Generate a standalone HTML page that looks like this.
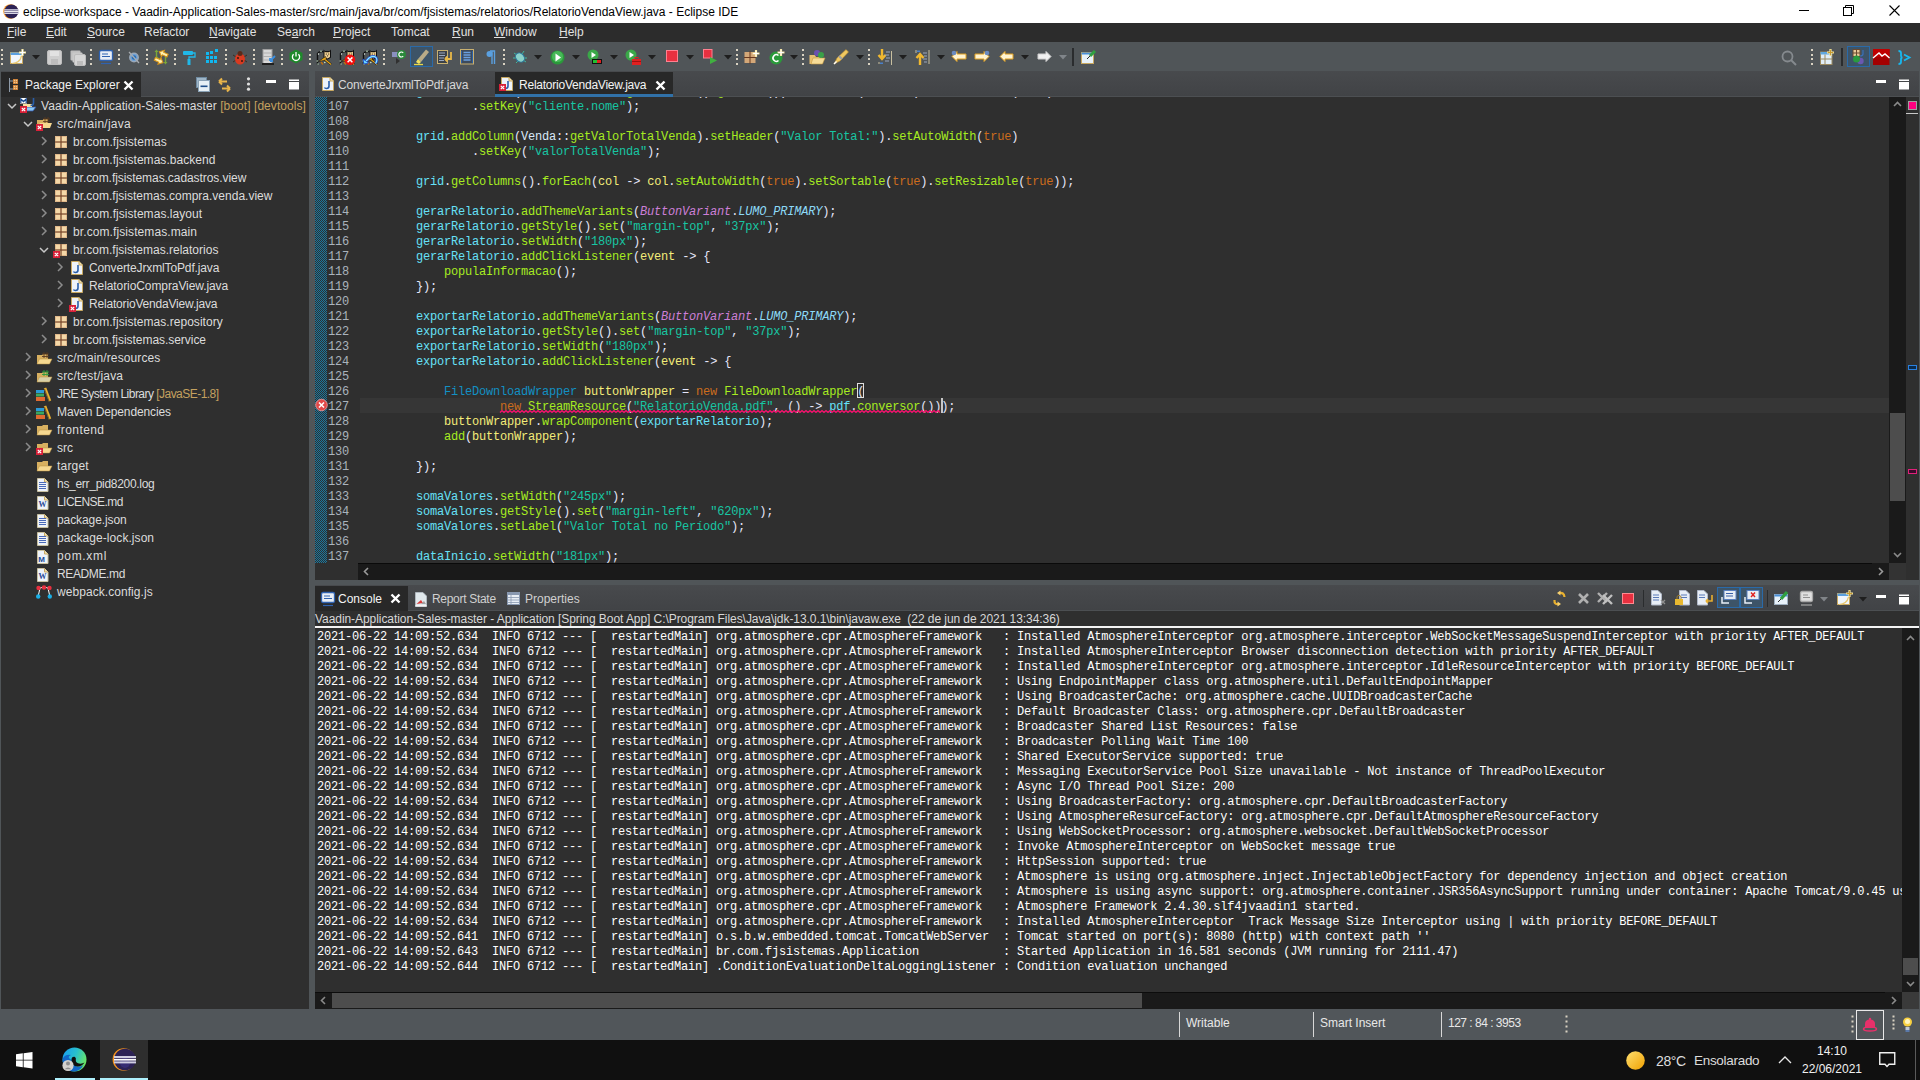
<!DOCTYPE html><html><head><meta charset="utf-8"><style>
html,body{margin:0;padding:0;}
body{width:1920px;height:1080px;position:relative;overflow:hidden;background:#505558;font-family:"Liberation Sans",sans-serif;}
.t{position:absolute;font-family:"Liberation Sans",sans-serif;font-size:12px;line-height:15px;white-space:pre;}
.m{position:absolute;font-family:"Liberation Mono",monospace;font-size:12px;letter-spacing:-0.2px;line-height:15px;white-space:pre;}
u{text-decoration:underline;text-underline-offset:1px;}
svg{position:absolute;overflow:visible;}
</style></head><body>
<div style="position:absolute;left:0px;top:0px;width:1920px;height:23px;background:#ffffff;"></div>
<svg style="left:3px;top:4px;" width="16" height="15" viewBox="0 0 16 15"><circle cx="7.6" cy="7.5" r="7.3" fill="#f7941e"/><circle cx="8.4" cy="7.5" r="7" fill="#2c2255"/><rect x="1.2" y="5.2" width="14.6" height="1.4" fill="#d8d6e6"/><rect x="1.2" y="7.1" width="14.6" height="1" fill="#ffffff"/><rect x="1.2" y="8.6" width="14.6" height="1.4" fill="#d8d6e6"/></svg>
<div class="t" style="left:23px;top:5px;color:#000;">eclipse-workspace - Vaadin-Application-Sales-master/src/main/java/br/com/fjsistemas/relatorios/RelatorioVendaView.java - Eclipse IDE</div>
<div style="position:absolute;left:1799px;top:10px;width:10px;height:1px;background:#000;"></div>
<svg style="left:1843px;top:5px;" width="12" height="12" viewBox="0 0 12 12"><rect x="0.5" y="2.5" width="8" height="8" fill="none" stroke="#000"/><path d="M2.5 2.5V0.5H10.5V8.5H8.5" fill="none" stroke="#000"/></svg>
<svg style="left:1889px;top:5px;" width="12" height="12" viewBox="0 0 12 12"><path d="M0.5 0.5L10.5 10.5M10.5 0.5L0.5 10.5" stroke="#000" stroke-width="1.1"/></svg>
<div style="position:absolute;left:0px;top:23px;width:1920px;height:19px;background:#2c2c2c;"></div>
<div class="t" style="left:7px;top:25px;color:#e2e2e2;"><u>F</u>ile</div>
<div class="t" style="left:46px;top:25px;color:#e2e2e2;"><u>E</u>dit</div>
<div class="t" style="left:87px;top:25px;color:#e2e2e2;"><u>S</u>ource</div>
<div class="t" style="left:144px;top:25px;color:#e2e2e2;">Refactor</div>
<div class="t" style="left:209px;top:25px;color:#e2e2e2;"><u>N</u>avigate</div>
<div class="t" style="left:277px;top:25px;color:#e2e2e2;">Se<u>a</u>rch</div>
<div class="t" style="left:333px;top:25px;color:#e2e2e2;"><u>P</u>roject</div>
<div class="t" style="left:391px;top:25px;color:#e2e2e2;">Tomcat</div>
<div class="t" style="left:452px;top:25px;color:#e2e2e2;"><u>R</u>un</div>
<div class="t" style="left:494px;top:25px;color:#e2e2e2;"><u>W</u>indow</div>
<div class="t" style="left:559px;top:25px;color:#e2e2e2;"><u>H</u>elp</div>
<div style="position:absolute;left:0px;top:42px;width:1920px;height:29px;background:#505558;"></div>
<svg style="left:1px;top:49px;" width="3" height="16" viewBox="0 0 3 16"><rect x="0" y="0" width="2" height="2" fill="#d9d2c2"/><rect x="0" y="5" width="2" height="2" fill="#d9d2c2"/><rect x="0" y="9" width="2" height="2" fill="#d9d2c2"/><rect x="0" y="14" width="2" height="2" fill="#d9d2c2"/></svg>
<svg style="left:90px;top:49px;" width="3" height="16" viewBox="0 0 3 16"><rect x="0" y="0" width="2" height="2" fill="#d9d2c2"/><rect x="0" y="5" width="2" height="2" fill="#d9d2c2"/><rect x="0" y="9" width="2" height="2" fill="#d9d2c2"/><rect x="0" y="14" width="2" height="2" fill="#d9d2c2"/></svg>
<svg style="left:118px;top:49px;" width="3" height="16" viewBox="0 0 3 16"><rect x="0" y="0" width="2" height="2" fill="#d9d2c2"/><rect x="0" y="5" width="2" height="2" fill="#d9d2c2"/><rect x="0" y="9" width="2" height="2" fill="#d9d2c2"/><rect x="0" y="14" width="2" height="2" fill="#d9d2c2"/></svg>
<svg style="left:146px;top:49px;" width="3" height="16" viewBox="0 0 3 16"><rect x="0" y="0" width="2" height="2" fill="#d9d2c2"/><rect x="0" y="5" width="2" height="2" fill="#d9d2c2"/><rect x="0" y="9" width="2" height="2" fill="#d9d2c2"/><rect x="0" y="14" width="2" height="2" fill="#d9d2c2"/></svg>
<svg style="left:174px;top:49px;" width="3" height="16" viewBox="0 0 3 16"><rect x="0" y="0" width="2" height="2" fill="#d9d2c2"/><rect x="0" y="5" width="2" height="2" fill="#d9d2c2"/><rect x="0" y="9" width="2" height="2" fill="#d9d2c2"/><rect x="0" y="14" width="2" height="2" fill="#d9d2c2"/></svg>
<svg style="left:225px;top:49px;" width="3" height="16" viewBox="0 0 3 16"><rect x="0" y="0" width="2" height="2" fill="#d9d2c2"/><rect x="0" y="5" width="2" height="2" fill="#d9d2c2"/><rect x="0" y="9" width="2" height="2" fill="#d9d2c2"/><rect x="0" y="14" width="2" height="2" fill="#d9d2c2"/></svg>
<svg style="left:253px;top:49px;" width="3" height="16" viewBox="0 0 3 16"><rect x="0" y="0" width="2" height="2" fill="#d9d2c2"/><rect x="0" y="5" width="2" height="2" fill="#d9d2c2"/><rect x="0" y="9" width="2" height="2" fill="#d9d2c2"/><rect x="0" y="14" width="2" height="2" fill="#d9d2c2"/></svg>
<svg style="left:281px;top:49px;" width="3" height="16" viewBox="0 0 3 16"><rect x="0" y="0" width="2" height="2" fill="#d9d2c2"/><rect x="0" y="5" width="2" height="2" fill="#d9d2c2"/><rect x="0" y="9" width="2" height="2" fill="#d9d2c2"/><rect x="0" y="14" width="2" height="2" fill="#d9d2c2"/></svg>
<svg style="left:309px;top:49px;" width="3" height="16" viewBox="0 0 3 16"><rect x="0" y="0" width="2" height="2" fill="#d9d2c2"/><rect x="0" y="5" width="2" height="2" fill="#d9d2c2"/><rect x="0" y="9" width="2" height="2" fill="#d9d2c2"/><rect x="0" y="14" width="2" height="2" fill="#d9d2c2"/></svg>
<svg style="left:383px;top:49px;" width="3" height="16" viewBox="0 0 3 16"><rect x="0" y="0" width="2" height="2" fill="#d9d2c2"/><rect x="0" y="5" width="2" height="2" fill="#d9d2c2"/><rect x="0" y="9" width="2" height="2" fill="#d9d2c2"/><rect x="0" y="14" width="2" height="2" fill="#d9d2c2"/></svg>
<svg style="left:503px;top:49px;" width="3" height="16" viewBox="0 0 3 16"><rect x="0" y="0" width="2" height="2" fill="#d9d2c2"/><rect x="0" y="5" width="2" height="2" fill="#d9d2c2"/><rect x="0" y="9" width="2" height="2" fill="#d9d2c2"/><rect x="0" y="14" width="2" height="2" fill="#d9d2c2"/></svg>
<svg style="left:736px;top:49px;" width="3" height="16" viewBox="0 0 3 16"><rect x="0" y="0" width="2" height="2" fill="#d9d2c2"/><rect x="0" y="5" width="2" height="2" fill="#d9d2c2"/><rect x="0" y="9" width="2" height="2" fill="#d9d2c2"/><rect x="0" y="14" width="2" height="2" fill="#d9d2c2"/></svg>
<svg style="left:802px;top:49px;" width="3" height="16" viewBox="0 0 3 16"><rect x="0" y="0" width="2" height="2" fill="#d9d2c2"/><rect x="0" y="5" width="2" height="2" fill="#d9d2c2"/><rect x="0" y="9" width="2" height="2" fill="#d9d2c2"/><rect x="0" y="14" width="2" height="2" fill="#d9d2c2"/></svg>
<svg style="left:868px;top:49px;" width="3" height="16" viewBox="0 0 3 16"><rect x="0" y="0" width="2" height="2" fill="#d9d2c2"/><rect x="0" y="5" width="2" height="2" fill="#d9d2c2"/><rect x="0" y="9" width="2" height="2" fill="#d9d2c2"/><rect x="0" y="14" width="2" height="2" fill="#d9d2c2"/></svg>
<svg style="left:1811px;top:49px;" width="3" height="16" viewBox="0 0 3 16"><rect x="0" y="0" width="2" height="2" fill="#d9d2c2"/><rect x="0" y="5" width="2" height="2" fill="#d9d2c2"/><rect x="0" y="9" width="2" height="2" fill="#d9d2c2"/><rect x="0" y="14" width="2" height="2" fill="#d9d2c2"/></svg>
<svg style="left:10px;top:49px;" width="16" height="16" viewBox="0 0 16 16"><rect x="0.5" y="3.5" width="12" height="11" fill="#f0f6fc" stroke="#c8a860"/><rect x="0.5" y="3.5" width="12" height="2.5" fill="#5aa0e0"/><path d="M2 14.5Q10 14 11.5 7" stroke="#e8c870" fill="none" stroke-width="1.2"/><path d="M12.5 0V7M9 3.5H16" stroke="#f6e6a0" stroke-width="2.2"/><path d="M12.5 0.8V6.2M9.8 3.5H15.2" stroke="#fff" stroke-width="1"/></svg>
<svg style="left:32px;top:55px;" width="8" height="5" viewBox="0 0 8 5"><path d="M0 0H8L4 4.5Z" fill="#1e1e1e"/></svg>
<svg style="left:47px;top:50px;" width="16" height="15" viewBox="0 0 16 15"><rect x="0.5" y="0.5" width="14" height="14" rx="1.5" fill="#cfcfcf" stroke="#bdbdbd"/><rect x="3" y="1" width="9" height="5" fill="#e2e2e2"/><rect x="4" y="9" width="7" height="5" fill="#bdbdbd"/></svg>
<svg style="left:70px;top:50px;" width="16" height="16" viewBox="0 0 16 16"><rect x="0.5" y="0.5" width="10" height="10" rx="1" fill="#bfbfbf"/><rect x="2.5" y="2.5" width="10" height="10" rx="1" fill="#c9c9c9"/><rect x="4.5" y="4.5" width="11" height="11" rx="1.5" fill="#d6d6d6" stroke="#bcbcbc"/><rect x="7" y="11" width="6" height="4" fill="#bdbdbd"/></svg>
<svg style="left:99px;top:50px;" width="14" height="14" viewBox="0 0 14 14"><rect x="0.5" y="0.5" width="13" height="10" rx="1.5" fill="#e8eef6" stroke="#2f62b0" stroke-width="1.3"/><path d="M3 4H9M3 6.5H11" stroke="#2f62b0" stroke-width="1"/><path d="M2 13.5H12" stroke="#2f62b0" stroke-width="1.2"/></svg>
<svg style="left:128px;top:51px;" width="13" height="13" viewBox="0 0 13 13"><circle cx="6" cy="6.5" r="4.2" fill="#6aa0d8" stroke="#9aa8b8" stroke-width="1.5"/><circle cx="6" cy="6.5" r="2.2" fill="#2b6cb0"/><path d="M1 1L11 12" stroke="#a8acb0" stroke-width="1.2"/></svg>
<svg style="left:153px;top:49px;" width="16" height="16" viewBox="0 0 16 16"><path d="M3.5 0.5L5.5 3H4.2V8H2.8V3H1.5Z" fill="#7aa838"/><path d="M12.5 15.5L10.5 13H11.8V8H13.2V13H14.5Z" fill="#7aa838"/><path d="M3 8L8 12" stroke="#7aa838" stroke-width="2"/><path d="M8 8L13 4" stroke="#7aa838" stroke-width="0"/><g transform="translate(5.5 0.5) rotate(25 4.5 4)"><path d="M0.5 4L4.5 0.5V2.5H9.5V5.5H4.5V7.5Z" fill="#fff0b0" stroke="#d89418" stroke-width="1"/></g><g transform="translate(1 7.5) rotate(25 4.5 4)"><path d="M9.5 4L5.5 0.5V2.5H0.5V5.5H5.5V7.5Z" fill="#fff0b0" stroke="#d89418" stroke-width="1"/></g></svg>
<svg style="left:183px;top:50px;" width="13" height="15" viewBox="0 0 13 15"><rect x="0" y="1" width="10" height="4" rx="1" fill="#20b8e8"/><path d="M10 3H12V7H6V9" stroke="#20b8e8" stroke-width="1.3" fill="none"/><rect x="4.5" y="9" width="3" height="6" fill="#20b8e8"/></svg>
<svg style="left:205px;top:49px;" width="13" height="16" viewBox="0 0 13 16"><rect x="1" y="3" width="3" height="3" fill="#10b8f0"/><rect x="5" y="2" width="3" height="3" fill="#10b8f0"/><rect x="10" y="0" width="3" height="3" fill="#10b8f0"/><rect x="1" y="7" width="3" height="3" fill="#10b8f0"/><rect x="5" y="7" width="3" height="3" fill="#10b8f0"/><rect x="9" y="7" width="3" height="3" fill="#10b8f0"/><rect x="1" y="11" width="3" height="3" fill="#10b8f0"/><rect x="5" y="11" width="3" height="3" fill="#10b8f0"/><rect x="9" y="11" width="3" height="3" fill="#10b8f0"/></svg>
<svg style="left:232px;top:50px;" width="16" height="15" viewBox="0 0 16 15"><path d="M1 5L4 7M15 5L12 7M1 12L4 10M15 12L12 10" stroke="#3a2a20" stroke-width="1"/><ellipse cx="8" cy="9" rx="5" ry="5.5" fill="#d83a20"/><circle cx="8" cy="3.5" r="2.5" fill="#5a2a1a"/><circle cx="6" cy="8" r="1" fill="#3a1a10"/><circle cx="10" cy="11" r="1" fill="#3a1a10"/></svg>
<svg style="left:262px;top:49px;" width="14" height="16" viewBox="0 0 14 16"><rect x="1" y="0.5" width="9" height="14" fill="#d8d8d8" stroke="#a0a0a0"/><path d="M1 4H10M1 7.5H10M1 11H10" stroke="#b0b0b0"/><rect x="0" y="14" width="12" height="2" fill="#202020"/><path d="M13 7L8 12M8 12V9M8 12H11" stroke="#3a8ee0" stroke-width="1.8" fill="none"/></svg>
<svg style="left:289px;top:49px;" width="14" height="15" viewBox="0 0 14 15"><path d="M7 0.5L13.5 4V11L7 14.5L0.5 11V4Z" fill="#1e8a2a"/><path d="M4.6 5.2A3.6 3.6 0 1 0 9.4 5.2" stroke="#fff" stroke-width="1.3" fill="none"/><path d="M7 3V7.5" stroke="#fff" stroke-width="1.3"/></svg>
<svg style="left:316px;top:49px;" width="16" height="16" viewBox="0 0 16 16"><path d="M1.5 15.5V4.5Q3 2 7.5 2.8" stroke="#101010" stroke-width="1.4" fill="none"/><circle cx="5" cy="2.2" r="0.8" fill="#c8e8c8"/><circle cx="2.5" cy="5" r="0.7" fill="#e8f0e8"/><circle cx="1.2" cy="12" r="0.7" fill="#c8e8c8"/><circle cx="2" cy="15" r="0.7" fill="#c8e8c8"/><path d="M7.5 0.5L9 2H13.5L15 0.5V8.5L11.5 10.5L7.5 8.5Z" fill="#101010"/><path d="M8.5 2.5L9.5 3.2H13L14 2.5V8L11.5 9.5L8.5 8Z" fill="#f0d090"/><circle cx="10.3" cy="5" r="0.6" fill="#101010"/><circle cx="12.7" cy="5" r="0.6" fill="#101010"/><path d="M10.8 6.5H12.3L11.5 7.8Z" fill="#101010"/><path d="M2.5 12.5L9.5 7.5L11 11Z" fill="#e8a818" stroke="#101010" stroke-width="0.6"/><path d="M9 10.5L15 15.5" stroke="#101010" stroke-width="2.2"/><path d="M9 10.5L15 15.5" stroke="#e8a818" stroke-width="1.2"/><path d="M5 13L7 15.5" stroke="#c07010" stroke-width="1.4"/><circle cx="8.8" cy="13.5" r="0.8" fill="#c8e8c8"/></svg>
<svg style="left:339px;top:49px;" width="16" height="16" viewBox="0 0 16 16"><path d="M1.5 15.5V4.5Q3 2 7.5 2.8" stroke="#101010" stroke-width="1.4" fill="none"/><circle cx="5" cy="2.2" r="0.8" fill="#c8e8c8"/><circle cx="2.5" cy="5" r="0.7" fill="#e8f0e8"/><circle cx="1.2" cy="12" r="0.7" fill="#c8e8c8"/><circle cx="2" cy="15" r="0.7" fill="#c8e8c8"/><path d="M7.5 0.5L9 2H13.5L15 0.5V8.5L11.5 10.5L7.5 8.5Z" fill="#101010"/><path d="M8.5 2.5L9.5 3.2H13L14 2.5V8L11.5 9.5L8.5 8Z" fill="#f0d090"/><circle cx="10.3" cy="5" r="0.6" fill="#101010"/><circle cx="12.7" cy="5" r="0.6" fill="#101010"/><path d="M10.8 6.5H12.3L11.5 7.8Z" fill="#101010"/><path d="M2.5 12.5L9.5 7.5L11 11Z" fill="#e8a818" stroke="#101010" stroke-width="0.6"/><path d="M9 10.5L15 15.5" stroke="#101010" stroke-width="2.2"/><path d="M9 10.5L15 15.5" stroke="#e8a818" stroke-width="1.2"/><path d="M5 13L7 15.5" stroke="#c07010" stroke-width="1.4"/><circle cx="8.8" cy="13.5" r="0.8" fill="#c8e8c8"/><circle cx="11" cy="10.8" r="5.3" fill="#f40c0c"/><path d="M8.6 8.4L13.4 13.2M13.4 8.4L8.6 13.2" stroke="#fff" stroke-width="1.5"/></svg>
<svg style="left:362px;top:49px;" width="16" height="16" viewBox="0 0 16 16"><path d="M1.5 15.5V4.5Q3 2 7.5 2.8" stroke="#101010" stroke-width="1.4" fill="none"/><circle cx="5" cy="2.2" r="0.8" fill="#c8e8c8"/><circle cx="2.5" cy="5" r="0.7" fill="#e8f0e8"/><circle cx="1.2" cy="12" r="0.7" fill="#c8e8c8"/><circle cx="2" cy="15" r="0.7" fill="#c8e8c8"/><path d="M7.5 0.5L9 2H13.5L15 0.5V8.5L11.5 10.5L7.5 8.5Z" fill="#101010"/><path d="M8.5 2.5L9.5 3.2H13L14 2.5V8L11.5 9.5L8.5 8Z" fill="#f0d090"/><circle cx="10.3" cy="5" r="0.6" fill="#101010"/><circle cx="12.7" cy="5" r="0.6" fill="#101010"/><path d="M10.8 6.5H12.3L11.5 7.8Z" fill="#101010"/><path d="M2.5 12.5L9.5 7.5L11 11Z" fill="#e8a818" stroke="#101010" stroke-width="0.6"/><path d="M9 10.5L15 15.5" stroke="#101010" stroke-width="2.2"/><path d="M9 10.5L15 15.5" stroke="#e8a818" stroke-width="1.2"/><path d="M5 13L7 15.5" stroke="#c07010" stroke-width="1.4"/><circle cx="8.8" cy="13.5" r="0.8" fill="#c8e8c8"/><path d="M13.5 14.5Q16 11 14 8.5Q11 6 7 9Q5 11 3.5 13" stroke="#1848d8" stroke-width="2.6" fill="none"/><path d="M13.5 14.5Q16 11 14 8.5Q11 6 7 9Q5 11 3.5 13" stroke="#90f0ff" stroke-width="1.2" fill="none"/><path d="M1 10L2 15L6.5 14Z" fill="#70e0ff" stroke="#1848d8" stroke-width="0.8"/></svg>
<svg style="left:391px;top:49px;" width="16" height="16" viewBox="0 0 16 16"><rect x="1" y="3" width="7" height="5" fill="#8a90c0"/><path d="M5 9L9 12L5 15Z" fill="#303030"/><circle cx="10.5" cy="5.5" r="4.5" fill="#2a8a3a"/><path d="M12.2 3.8A2.5 2.5 0 1 0 12.2 7.2" stroke="#fff" stroke-width="1.2" fill="none"/></svg>
<div style="position:absolute;left:410px;top:46px;width:23px;height:21px;background:#3d5468;border:1px solid #2a6aa8;box-sizing:border-box;"></div>
<svg style="left:414px;top:49px;" width="16" height="16" viewBox="0 0 16 16"><path d="M4 10L12 0.5L15 3L7 13Z" fill="#b8ab88"/><path d="M2 13L4 10L7 13L5 15Z" fill="#f0e060"/><path d="M0 15.5H9" stroke="#e8d848" stroke-width="1.3"/></svg>
<svg style="left:437px;top:50px;" width="16" height="15" viewBox="0 0 16 15"><rect x="0.5" y="0.5" width="10" height="13" fill="#3b4148" stroke="#c8b070"/><path d="M2 3H8M2 5.5H8M2 8H7M2 10.5H7" stroke="#9aa8c0"/><path d="M14 2V9H8M8 9L10.5 6.5M8 9L10.5 11.5" stroke="#e8b848" stroke-width="1.8" fill="none"/></svg>
<svg style="left:460px;top:49px;" width="14" height="16" viewBox="0 0 14 16"><rect x="0.5" y="0.5" width="13" height="14.5" fill="#3c4a5c" stroke="#c8b070"/><path d="M3.5 3.5H10.5M3.5 6H10.5M3.5 8.5H10.5M3.5 11H10.5" stroke="#6aa0e0" stroke-width="1.3"/><path d="M1.5 2V14M12.5 2V14" stroke="#2a60a8"/></svg>
<svg style="left:486px;top:50px;" width="9" height="14" viewBox="0 0 9 14"><path d="M4 1H8.5V14M6 1V14" stroke="#5aa0e0" stroke-width="1.4" fill="none"/><circle cx="3.5" cy="4" r="3" fill="#5aa0e0"/></svg>
<svg style="left:512px;top:49px;" width="16" height="16" viewBox="0 0 16 16"><path d="M2 4L5 6M14 13L11 11M1 9H4M12 9H15M4 14L6 12M12 2L10 5" stroke="#40b8a0" stroke-width="1"/><ellipse cx="8" cy="8.5" rx="4" ry="5" transform="rotate(-40 8 8.5)" fill="#8ad0c8" stroke="#2a7aa0" stroke-width="1"/></svg>
<svg style="left:534px;top:55px;" width="8" height="5" viewBox="0 0 8 5"><path d="M0 0H8L4 4.5Z" fill="#1e1e1e"/></svg>
<svg style="left:550px;top:50px;" width="15" height="15" viewBox="0 0 15 15"><circle cx="7.5" cy="7.5" r="7" fill="#2a9a3a"/><circle cx="7.5" cy="6.5" r="5.5" fill="#48b858"/><path d="M5.5 3.5L11 7.5L5.5 11.5Z" fill="#fff"/></svg>
<svg style="left:572px;top:55px;" width="8" height="5" viewBox="0 0 8 5"><path d="M0 0H8L4 4.5Z" fill="#1e1e1e"/></svg>
<svg style="left:587px;top:49px;" width="16" height="16" viewBox="0 0 16 16"><circle cx="6" cy="6" r="5.5" fill="#3aa848"/><path d="M4.5 3L9 6L4.5 9Z" fill="#fff"/><rect x="5" y="10" width="10" height="5" fill="#101010"/><rect x="6" y="11" width="4" height="3" fill="#20c030"/><rect x="10" y="11" width="4" height="3" fill="#e02020"/></svg>
<svg style="left:610px;top:55px;" width="8" height="5" viewBox="0 0 8 5"><path d="M0 0H8L4 4.5Z" fill="#1e1e1e"/></svg>
<svg style="left:625px;top:49px;" width="16" height="16" viewBox="0 0 16 16"><circle cx="6" cy="6" r="5.5" fill="#3aa848"/><path d="M4.5 3L9 6L4.5 9Z" fill="#fff"/><rect x="7" y="10" width="9" height="6" fill="#e02020"/><rect x="10" y="8.5" width="3" height="2" fill="none" stroke="#e02020"/><path d="M7 12.5H16" stroke="#a01010"/></svg>
<svg style="left:648px;top:55px;" width="8" height="5" viewBox="0 0 8 5"><path d="M0 0H8L4 4.5Z" fill="#1e1e1e"/></svg>
<svg style="left:666px;top:50px;" width="12" height="12" viewBox="0 0 12 12"><rect x="0.5" y="0.5" width="11" height="11" fill="#e83040" stroke="#ff8090"/></svg>
<svg style="left:686px;top:55px;" width="8" height="5" viewBox="0 0 8 5"><path d="M0 0H8L4 4.5Z" fill="#1e1e1e"/></svg>
<svg style="left:703px;top:49px;" width="15" height="16" viewBox="0 0 15 16"><rect x="0.5" y="0.5" width="8.5" height="8.5" fill="#e83040" stroke="#ff8090"/><path d="M7 8L14 11.5L7 15Z" fill="#40b040"/></svg>
<svg style="left:724px;top:55px;" width="8" height="5" viewBox="0 0 8 5"><path d="M0 0H8L4 4.5Z" fill="#1e1e1e"/></svg>
<svg style="left:744px;top:50px;" width="16" height="15" viewBox="0 0 16 15"><rect x="0.5" y="2" width="11" height="11" fill="#d4a878"/><path d="M6 1V14M0 7.5H12" stroke="#6a3a20" stroke-width="1"/><path d="M12 0V7M8.5 3.5H15.5" stroke="#f6e6a0" stroke-width="2.2"/><path d="M12 0.8V6.2M9.3 3.5H14.7" stroke="#fff" stroke-width="1"/></svg>
<svg style="left:769px;top:49px;" width="16" height="16" viewBox="0 0 16 16"><circle cx="7" cy="9" r="6.5" fill="#2a9a3a"/><path d="M9.5 6.5A3.3 3.3 0 1 0 9.5 11.5" stroke="#fff" stroke-width="1.6" fill="none"/><path d="M12 0V7M8.5 3.5H15.5" stroke="#f6e6a0" stroke-width="2.2"/><path d="M12 0.8V6.2M9.3 3.5H14.7" stroke="#fff" stroke-width="1"/></svg>
<svg style="left:790px;top:55px;" width="8" height="5" viewBox="0 0 8 5"><path d="M0 0H8L4 4.5Z" fill="#1e1e1e"/></svg>
<svg style="left:809px;top:49px;" width="16" height="16" viewBox="0 0 16 16"><path d="M0.5 6H6L7 8H13V15H0.5Z" fill="#e8c070"/><path d="M2 15L4 9H16L13.5 15Z" fill="#f6dc98" stroke="#c89a40" stroke-width="0.6"/><circle cx="8" cy="4" r="3" fill="#6a50b0"/><circle cx="12" cy="6" r="3" fill="#3aa048"/></svg>
<svg style="left:833px;top:49px;" width="16" height="16" viewBox="0 0 16 16"><path d="M1 15L4 9L13 0.5L15.5 3L7 12Z" fill="#f0c860" stroke="#b08830" stroke-width="0.6"/><path d="M6 7L9 10" stroke="#a0a0a0" stroke-width="2.2"/><path d="M1 15L3.5 12.5" stroke="#fff" stroke-width="1.5"/></svg>
<svg style="left:856px;top:55px;" width="8" height="5" viewBox="0 0 8 5"><path d="M0 0H8L4 4.5Z" fill="#1e1e1e"/></svg>
<svg style="left:878px;top:49px;" width="14" height="16" viewBox="0 0 14 16"><path d="M4 0V8M0.5 6L4 10L7.5 6" stroke="#f0b830" stroke-width="2.4" fill="none"/><path d="M8 3H12M7 6H11M8 9H12M7 12H11" stroke="#9aa8c0" stroke-width="1"/><path d="M13.5 2V16M1 13V15" stroke="#c8c0a0"/><rect x="2" y="13.5" width="3" height="1.5" fill="#4a80c8"/></svg>
<svg style="left:899px;top:55px;" width="8" height="5" viewBox="0 0 8 5"><path d="M0 0H8L4 4.5Z" fill="#1e1e1e"/></svg>
<svg style="left:915px;top:49px;" width="15" height="16" viewBox="0 0 15 16"><path d="M5 16V7M1.5 9L5 5L8.5 9" stroke="#f0b830" stroke-width="2.4" fill="none"/><path d="M8 4H12M9 7H12M8 10H12M9 13H12" stroke="#9aa8c0" stroke-width="1"/><path d="M14 1V15M1 1V4" stroke="#c8c0a0"/><rect x="2" y="1.5" width="3" height="1.5" fill="#4a80c8"/></svg>
<svg style="left:937px;top:55px;" width="8" height="5" viewBox="0 0 8 5"><path d="M0 0H8L4 4.5Z" fill="#1e1e1e"/></svg>
<svg style="left:951px;top:50px;" width="16" height="13" viewBox="0 0 16 13"><path d="M1 6.5L6 1.5V4H15V9H6V11.5Z" fill="#fff3d0" stroke="#e0a020" stroke-width="1"/><circle cx="3" cy="3" r="2.3" fill="#6a8ac0"/></svg>
<svg style="left:974px;top:50px;" width="16" height="13" viewBox="0 0 16 13"><path d="M15 6.5L10 1.5V4H1V9H10V11.5Z" fill="#fff3d0" stroke="#e0a020" stroke-width="1"/><circle cx="13" cy="3" r="2.3" fill="#6a8ac0"/></svg>
<svg style="left:999px;top:50px;" width="15" height="13" viewBox="0 0 15 13"><path d="M1 6.5L6 1.5V4H14V9H6V11.5Z" fill="#fff3d0" stroke="#e0a020" stroke-width="1"/></svg>
<svg style="left:1021px;top:55px;" width="8" height="5" viewBox="0 0 8 5"><path d="M0 0H8L4 4.5Z" fill="#1e1e1e"/></svg>
<svg style="left:1037px;top:50px;" width="15" height="13" viewBox="0 0 15 13"><path d="M14 6.5L9 1.5V4H1V9H9V11.5Z" fill="#f0f0f0" stroke="#d0d0d0" stroke-width="1"/></svg>
<svg style="left:1059px;top:55px;" width="8" height="5" viewBox="0 0 8 5"><path d="M0 0H8L4 4.5Z" fill="#80858a"/></svg>
<div style="position:absolute;left:1072px;top:48px;width:2px;height:18px;background:#2a2c2e;"></div>
<svg style="left:1081px;top:49px;" width="16" height="16" viewBox="0 0 16 16"><rect x="0.5" y="3.5" width="12" height="11" fill="#e8f2fa" stroke="#c8a860"/><rect x="0.5" y="3.5" width="12" height="2" fill="#4a90d8"/><path d="M9 7L14 2" stroke="#30a040" stroke-width="3"/><path d="M9 7L6 10" stroke="#303030" stroke-width="1"/></svg>
<svg style="left:1781px;top:50px;" width="16" height="16" viewBox="0 0 16 16"><circle cx="6.5" cy="6.5" r="5" fill="none" stroke="#858a8e" stroke-width="1.8"/><path d="M10 10L15 15" stroke="#858a8e" stroke-width="2"/></svg>
<svg style="left:1820px;top:49px;" width="15" height="16" viewBox="0 0 15 16"><rect x="0.5" y="3" width="11.5" height="12.5" fill="#e0eef8" stroke="#9a8a60"/><rect x="0.5" y="3" width="11.5" height="2.5" fill="#60a8e0"/><path d="M5 5.5V15.5M0.5 10H12" stroke="#9a8a60"/><path d="M10.5 0V7M7 3.5H14" stroke="#f6e6a0" stroke-width="2.2"/><path d="M10.5 0.8V6.2M7.8 3.5H13.2" stroke="#c89a30" stroke-width="1"/></svg>
<div style="position:absolute;left:1841px;top:48px;width:2px;height:18px;background:#2a2c2e;"></div>
<div style="position:absolute;left:1847px;top:46px;width:23px;height:21px;background:#3d5468;border:1px solid #2a6aa8;box-sizing:border-box;"></div>
<svg style="left:1851px;top:49px;" width="16" height="16" viewBox="0 0 16 16"><rect x="2" y="0.5" width="7" height="7" fill="#e8c898" stroke="#6a4a30"/><path d="M5.5 0V8M1.5 4H9.5" stroke="#6a4a30"/><path d="M12 1V5Q12 7 9 7" stroke="#3a70b8" stroke-width="1.2" fill="none"/><circle cx="9.5" cy="12" r="3.2" fill="#6a58b0"/><circle cx="5.5" cy="10" r="3.5" fill="#2a9a40"/></svg>
<svg style="left:1873px;top:49px;" width="17" height="16" viewBox="0 0 17 16"><rect x="0" y="0" width="16.5" height="16" fill="#a40000"/><rect x="0" y="0" width="16.5" height="8" fill="#c00000"/><path d="M0 9L6 4L9 7L12 5L16.5 9" stroke="#fff" stroke-width="1.4" fill="none"/></svg>
<svg style="left:1897px;top:50px;" width="14" height="15" viewBox="0 0 14 15"><path d="M1.5 1Q4 1 4 3V6Q4 7.5 5.5 7.5Q4 7.5 4 9V12Q4 14 1.5 14" stroke="#18b8f0" stroke-width="1.8" fill="none"/><path d="M7 4.5L12.5 7.5L7 10.5" stroke="#18b8f0" stroke-width="1.8" fill="none"/></svg>
<div style="position:absolute;left:1px;top:71px;width:308px;height:938px;background:#2f2f2f;"></div>
<div style="position:absolute;left:1px;top:71px;width:308px;height:25px;background:linear-gradient(#484a4d,#414346)"></div>
<div style="position:absolute;left:1px;top:96px;width:308px;height:1px;background:#4c4f52;"></div>
<div style="position:absolute;left:1px;top:72px;width:140px;height:25px;background:#282828;"></div>
<svg style="left:7px;top:77px;" width="14" height="16" viewBox="0 0 14 16"><path d="M2.5 1V15M2.5 4H6M2.5 12H6" stroke="#8e9aa8" stroke-width="1"/><rect x="6" y="2" width="5" height="5" fill="#c87a30"/><rect x="6" y="8" width="5" height="5" fill="#c87a30"/><rect x="6.8" y="2.8" width="1.4" height="1.4" fill="#f0c890"/><rect x="8.8" y="2.8" width="1.4" height="1.4" fill="#f0c890"/><rect x="6.8" y="4.8" width="1.4" height="1.4" fill="#f0c890"/><rect x="8.8" y="4.8" width="1.4" height="1.4" fill="#f0c890"/><rect x="6.8" y="8.8" width="1.4" height="1.4" fill="#f0c890"/><rect x="8.8" y="8.8" width="1.4" height="1.4" fill="#f0c890"/><rect x="6.8" y="10.8" width="1.4" height="1.4" fill="#f0c890"/><rect x="8.8" y="10.8" width="1.4" height="1.4" fill="#f0c890"/></svg>
<div class="t" style="left:25px;top:78px;color:#f0f0f0;">Package Explorer</div>
<svg style="left:123px;top:80px;" width="11" height="11" viewBox="0 0 11 11"><path d="M1.5 1.5L9.5 9.5M9.5 1.5L1.5 9.5" stroke="#ffffff" stroke-width="2.4"/></svg>
<svg style="left:196px;top:77px;" width="14" height="15" viewBox="0 0 14 15"><rect x="0.5" y="0.5" width="10" height="10" fill="#9fb6c8" stroke="#6f8aa0"/><rect x="2.5" y="3.5" width="11" height="11" fill="#e6f0f6" stroke="#8aa2b6"/><rect x="4.5" y="8.5" width="7" height="1.6" fill="#1f4f8a"/></svg>
<svg style="left:216px;top:77px;" width="17" height="16" viewBox="0 0 17 16"><path d="M3 4.5H11M3 4.5L6 1.5M3 4.5L6 7.5" fill="none" stroke="#e8b44a" stroke-width="2"/><path d="M14 11.5H6M14 11.5L11 8.5M14 11.5L11 14.5" fill="none" stroke="#e8b44a" stroke-width="2"/></svg>
<svg style="left:246px;top:77px;" width="5" height="15" viewBox="0 0 5 15"><circle cx="2.5" cy="1.8" r="1.6" fill="#e0e0e0"/><circle cx="2.5" cy="7.0" r="1.6" fill="#e0e0e0"/><circle cx="2.5" cy="12.200000000000001" r="1.6" fill="#e0e0e0"/></svg>
<div style="position:absolute;left:266px;top:80px;width:10px;height:3px;background:#ffffff;"></div>
<svg style="left:288px;top:79px;" width="12" height="11" viewBox="0 0 12 11"><rect x="1" y="0.5" width="10" height="1.5" fill="#fff"/><rect x="1" y="3" width="10" height="7.5" fill="#fff"/></svg>
<div style="position:absolute;left:51px;top:242px;width:168px;height:17px;background:#323232;"></div>
<svg style="left:7px;top:103px;" width="10" height="7" viewBox="0 0 10 7"><path d="M1 1L5 5L9 1" fill="none" stroke="#c8c8c8" stroke-width="1.5"/></svg>
<svg style="left:20px;top:98px;" width="16" height="16" viewBox="0 0 16 16"><path d="M2 9H16L13 13H4Z" fill="#8ac8f8" stroke="#3050a0" stroke-width="0.8"/><path d="M3 6H12V9H3Z" fill="#f6e0a0"/><rect x="0" y="0" width="7" height="5.5" fill="#fff"/><path d="M0.8 5V1L3.5 3.5L6.2 1V5" stroke="#1a4a90" stroke-width="1.3" fill="none"/><path d="M13.5 0V5Q13.5 7.5 10.5 7.5" stroke="#2a5ea8" stroke-width="1.6" fill="none"/></svg>
<svg style="left:20px;top:106px;" width="7" height="7" viewBox="0 0 7 7"><rect x="0" y="0" width="7" height="7" fill="#d82038"/><path d="M1.8 1.8L5.2 5.2M5.2 1.8L1.8 5.2" stroke="#fff" stroke-width="1.2"/></svg>
<div class="t" style="left:41px;top:99px;color:#dcdcdc;letter-spacing:0.062px">Vaadin-Application-Sales-master<span style="color:#c4a15f"> [boot] [devtools]</span></div>
<svg style="left:23px;top:121px;" width="10" height="7" viewBox="0 0 10 7"><path d="M1 1L5 5L9 1" fill="none" stroke="#c8c8c8" stroke-width="1.5"/></svg>
<svg style="left:36px;top:116px;" width="16" height="16" viewBox="0 0 16 16"><path d="M1 4H7V3H12V11H1Z" fill="#d8b060"/><path d="M2 11L4 7H16L14 12H1Z" fill="#f6d890"/><path d="M9 1V7M12 1V7M7 3H14M7 5.5H14" stroke="#5a3a20" stroke-width="0.8"/></svg>
<svg style="left:36px;top:124px;" width="7" height="7" viewBox="0 0 7 7"><rect x="0" y="0" width="7" height="7" fill="#d82038"/><path d="M1.8 1.8L5.2 5.2M5.2 1.8L1.8 5.2" stroke="#fff" stroke-width="1.2"/></svg>
<div class="t" style="left:57px;top:117px;color:#dcdcdc;letter-spacing:0.250px">src/main/java</div>
<svg style="left:41px;top:136px;" width="7" height="10" viewBox="0 0 7 10"><path d="M1 1L5 5L1 9" fill="none" stroke="#8c8c8c" stroke-width="1.5"/></svg>
<svg style="left:55px;top:136px;" width="12" height="12" viewBox="0 0 12 12"><rect x="0" y="0" width="12" height="12" fill="#e0b88a"/><rect x="1" y="1" width="4.3" height="4.3" fill="#f4d8a8"/><rect x="6.7" y="1" width="4.3" height="4.3" fill="#f4d8a8"/><rect x="1" y="6.7" width="4.3" height="4.3" fill="#f4d8a8"/><rect x="6.7" y="6.7" width="4.3" height="4.3" fill="#f4d8a8"/><path d="M6 0V12M0 6H12" stroke="#6a3a20" stroke-width="1"/></svg>
<div class="t" style="left:73px;top:135px;color:#dcdcdc;letter-spacing:0.062px">br.com.fjsistemas</div>
<svg style="left:41px;top:154px;" width="7" height="10" viewBox="0 0 7 10"><path d="M1 1L5 5L1 9" fill="none" stroke="#8c8c8c" stroke-width="1.5"/></svg>
<svg style="left:55px;top:154px;" width="12" height="12" viewBox="0 0 12 12"><rect x="0" y="0" width="12" height="12" fill="#e0b88a"/><rect x="1" y="1" width="4.3" height="4.3" fill="#f4d8a8"/><rect x="6.7" y="1" width="4.3" height="4.3" fill="#f4d8a8"/><rect x="1" y="6.7" width="4.3" height="4.3" fill="#f4d8a8"/><rect x="6.7" y="6.7" width="4.3" height="4.3" fill="#f4d8a8"/><path d="M6 0V12M0 6H12" stroke="#6a3a20" stroke-width="1"/></svg>
<div class="t" style="left:73px;top:153px;color:#dcdcdc;letter-spacing:0.042px">br.com.fjsistemas.backend</div>
<svg style="left:41px;top:172px;" width="7" height="10" viewBox="0 0 7 10"><path d="M1 1L5 5L1 9" fill="none" stroke="#8c8c8c" stroke-width="1.5"/></svg>
<svg style="left:55px;top:172px;" width="12" height="12" viewBox="0 0 12 12"><rect x="0" y="0" width="12" height="12" fill="#e0b88a"/><rect x="1" y="1" width="4.3" height="4.3" fill="#f4d8a8"/><rect x="6.7" y="1" width="4.3" height="4.3" fill="#f4d8a8"/><rect x="1" y="6.7" width="4.3" height="4.3" fill="#f4d8a8"/><rect x="6.7" y="6.7" width="4.3" height="4.3" fill="#f4d8a8"/><path d="M6 0V12M0 6H12" stroke="#6a3a20" stroke-width="1"/></svg>
<div class="t" style="left:73px;top:171px;color:#dcdcdc;letter-spacing:-0.065px">br.com.fjsistemas.cadastros.view</div>
<svg style="left:41px;top:190px;" width="7" height="10" viewBox="0 0 7 10"><path d="M1 1L5 5L1 9" fill="none" stroke="#8c8c8c" stroke-width="1.5"/></svg>
<svg style="left:55px;top:190px;" width="12" height="12" viewBox="0 0 12 12"><rect x="0" y="0" width="12" height="12" fill="#e0b88a"/><rect x="1" y="1" width="4.3" height="4.3" fill="#f4d8a8"/><rect x="6.7" y="1" width="4.3" height="4.3" fill="#f4d8a8"/><rect x="1" y="6.7" width="4.3" height="4.3" fill="#f4d8a8"/><rect x="6.7" y="6.7" width="4.3" height="4.3" fill="#f4d8a8"/><path d="M6 0V12M0 6H12" stroke="#6a3a20" stroke-width="1"/></svg>
<div class="t" style="left:73px;top:189px;color:#dcdcdc;letter-spacing:0.000px">br.com.fjsistemas.compra.venda.view</div>
<svg style="left:41px;top:208px;" width="7" height="10" viewBox="0 0 7 10"><path d="M1 1L5 5L1 9" fill="none" stroke="#8c8c8c" stroke-width="1.5"/></svg>
<svg style="left:55px;top:208px;" width="12" height="12" viewBox="0 0 12 12"><rect x="0" y="0" width="12" height="12" fill="#e0b88a"/><rect x="1" y="1" width="4.3" height="4.3" fill="#f4d8a8"/><rect x="6.7" y="1" width="4.3" height="4.3" fill="#f4d8a8"/><rect x="1" y="6.7" width="4.3" height="4.3" fill="#f4d8a8"/><rect x="6.7" y="6.7" width="4.3" height="4.3" fill="#f4d8a8"/><path d="M6 0V12M0 6H12" stroke="#6a3a20" stroke-width="1"/></svg>
<div class="t" style="left:73px;top:207px;color:#dcdcdc;letter-spacing:0.043px">br.com.fjsistemas.layout</div>
<svg style="left:41px;top:226px;" width="7" height="10" viewBox="0 0 7 10"><path d="M1 1L5 5L1 9" fill="none" stroke="#8c8c8c" stroke-width="1.5"/></svg>
<svg style="left:55px;top:226px;" width="12" height="12" viewBox="0 0 12 12"><rect x="0" y="0" width="12" height="12" fill="#e0b88a"/><rect x="1" y="1" width="4.3" height="4.3" fill="#f4d8a8"/><rect x="6.7" y="1" width="4.3" height="4.3" fill="#f4d8a8"/><rect x="1" y="6.7" width="4.3" height="4.3" fill="#f4d8a8"/><rect x="6.7" y="6.7" width="4.3" height="4.3" fill="#f4d8a8"/><path d="M6 0V12M0 6H12" stroke="#6a3a20" stroke-width="1"/></svg>
<div class="t" style="left:73px;top:225px;color:#dcdcdc;letter-spacing:0.095px">br.com.fjsistemas.main</div>
<svg style="left:39px;top:247px;" width="10" height="7" viewBox="0 0 10 7"><path d="M1 1L5 5L9 1" fill="none" stroke="#c8c8c8" stroke-width="1.5"/></svg>
<svg style="left:55px;top:244px;" width="12" height="12" viewBox="0 0 12 12"><rect x="0" y="0" width="12" height="12" fill="#e0b88a"/><rect x="1" y="1" width="4.3" height="4.3" fill="#f4d8a8"/><rect x="6.7" y="1" width="4.3" height="4.3" fill="#f4d8a8"/><rect x="1" y="6.7" width="4.3" height="4.3" fill="#f4d8a8"/><rect x="6.7" y="6.7" width="4.3" height="4.3" fill="#f4d8a8"/><path d="M6 0V12M0 6H12" stroke="#6a3a20" stroke-width="1"/></svg>
<svg style="left:53px;top:251px;" width="7" height="7" viewBox="0 0 7 7"><rect x="0" y="0" width="7" height="7" fill="#d82038"/><path d="M1.8 1.8L5.2 5.2M5.2 1.8L1.8 5.2" stroke="#fff" stroke-width="1.2"/></svg>
<div class="t" style="left:73px;top:243px;color:#dcdcdc;letter-spacing:0.000px">br.com.fjsistemas.relatorios</div>
<svg style="left:57px;top:262px;" width="7" height="10" viewBox="0 0 7 10"><path d="M1 1L5 5L1 9" fill="none" stroke="#8c8c8c" stroke-width="1.5"/></svg>
<svg style="left:71px;top:261px;" width="12" height="14" viewBox="0 0 12 14"><path d="M0.5 0.5H8L11.5 4V13.5H0.5Z" fill="#eef3fa" stroke="#c8a860"/><path d="M8 0.5V4H11.5" fill="#f6e6b0" stroke="#c8a860"/><path d="M7 4V9Q7 11.5 4.5 11.5Q3 11.5 2.5 10.5" stroke="#2a5ea8" stroke-width="1.6" fill="none"/></svg>
<div class="t" style="left:89px;top:261px;color:#dcdcdc;letter-spacing:-0.136px">ConverteJrxmlToPdf.java</div>
<svg style="left:57px;top:280px;" width="7" height="10" viewBox="0 0 7 10"><path d="M1 1L5 5L1 9" fill="none" stroke="#8c8c8c" stroke-width="1.5"/></svg>
<svg style="left:71px;top:279px;" width="12" height="14" viewBox="0 0 12 14"><path d="M0.5 0.5H8L11.5 4V13.5H0.5Z" fill="#eef3fa" stroke="#c8a860"/><path d="M8 0.5V4H11.5" fill="#f6e6b0" stroke="#c8a860"/><path d="M7 4V9Q7 11.5 4.5 11.5Q3 11.5 2.5 10.5" stroke="#2a5ea8" stroke-width="1.6" fill="none"/></svg>
<div class="t" style="left:89px;top:279px;color:#dcdcdc;letter-spacing:-0.087px">RelatorioCompraView.java</div>
<svg style="left:57px;top:298px;" width="7" height="10" viewBox="0 0 7 10"><path d="M1 1L5 5L1 9" fill="none" stroke="#8c8c8c" stroke-width="1.5"/></svg>
<svg style="left:71px;top:297px;" width="12" height="14" viewBox="0 0 12 14"><path d="M0.5 0.5H8L11.5 4V13.5H0.5Z" fill="#eef3fa" stroke="#c8a860"/><path d="M8 0.5V4H11.5" fill="#f6e6b0" stroke="#c8a860"/><path d="M7 4V9Q7 11.5 4.5 11.5Q3 11.5 2.5 10.5" stroke="#2a5ea8" stroke-width="1.6" fill="none"/></svg>
<svg style="left:69px;top:305px;" width="7" height="7" viewBox="0 0 7 7"><rect x="0" y="0" width="7" height="7" fill="#d82038"/><path d="M1.8 1.8L5.2 5.2M5.2 1.8L1.8 5.2" stroke="#fff" stroke-width="1.2"/></svg>
<div class="t" style="left:89px;top:297px;color:#dcdcdc;letter-spacing:-0.182px">RelatorioVendaView.java</div>
<svg style="left:41px;top:316px;" width="7" height="10" viewBox="0 0 7 10"><path d="M1 1L5 5L1 9" fill="none" stroke="#8c8c8c" stroke-width="1.5"/></svg>
<svg style="left:55px;top:316px;" width="12" height="12" viewBox="0 0 12 12"><rect x="0" y="0" width="12" height="12" fill="#e0b88a"/><rect x="1" y="1" width="4.3" height="4.3" fill="#f4d8a8"/><rect x="6.7" y="1" width="4.3" height="4.3" fill="#f4d8a8"/><rect x="1" y="6.7" width="4.3" height="4.3" fill="#f4d8a8"/><rect x="6.7" y="6.7" width="4.3" height="4.3" fill="#f4d8a8"/><path d="M6 0V12M0 6H12" stroke="#6a3a20" stroke-width="1"/></svg>
<div class="t" style="left:73px;top:315px;color:#dcdcdc;letter-spacing:0.037px">br.com.fjsistemas.repository</div>
<svg style="left:41px;top:334px;" width="7" height="10" viewBox="0 0 7 10"><path d="M1 1L5 5L1 9" fill="none" stroke="#8c8c8c" stroke-width="1.5"/></svg>
<svg style="left:55px;top:334px;" width="12" height="12" viewBox="0 0 12 12"><rect x="0" y="0" width="12" height="12" fill="#e0b88a"/><rect x="1" y="1" width="4.3" height="4.3" fill="#f4d8a8"/><rect x="6.7" y="1" width="4.3" height="4.3" fill="#f4d8a8"/><rect x="1" y="6.7" width="4.3" height="4.3" fill="#f4d8a8"/><rect x="6.7" y="6.7" width="4.3" height="4.3" fill="#f4d8a8"/><path d="M6 0V12M0 6H12" stroke="#6a3a20" stroke-width="1"/></svg>
<div class="t" style="left:73px;top:333px;color:#dcdcdc;letter-spacing:-0.042px">br.com.fjsistemas.service</div>
<svg style="left:25px;top:352px;" width="7" height="10" viewBox="0 0 7 10"><path d="M1 1L5 5L1 9" fill="none" stroke="#8c8c8c" stroke-width="1.5"/></svg>
<svg style="left:36px;top:350px;" width="16" height="16" viewBox="0 0 16 16"><path d="M1 5H6L7 4H12V14H1Z" fill="#d8b060"/><path d="M1 14L3.5 9H16L13.5 14Z" fill="#f6d890" stroke="#b89040" stroke-width="0.5"/><path d="M8 2V8M11 2V8M6 4H13M6 6.5H13" stroke="#5a3a20" stroke-width="0.9"/></svg>
<div class="t" style="left:57px;top:351px;color:#dcdcdc;letter-spacing:0.118px">src/main/resources</div>
<svg style="left:25px;top:370px;" width="7" height="10" viewBox="0 0 7 10"><path d="M1 1L5 5L1 9" fill="none" stroke="#8c8c8c" stroke-width="1.5"/></svg>
<svg style="left:36px;top:368px;" width="16" height="16" viewBox="0 0 16 16"><path d="M1 5H6L7 4H12V14H1Z" fill="#d8b060"/><path d="M1 14L3.5 9H16L13.5 14Z" fill="#d8d0a8" stroke="#b89040" stroke-width="0.5"/><path d="M8 2V8M11 2V8M6 4H13M6 6.5H13" stroke="#2a9a40" stroke-width="0.9"/></svg>
<div class="t" style="left:57px;top:369px;color:#dcdcdc;letter-spacing:0.167px">src/test/java</div>
<svg style="left:25px;top:388px;" width="7" height="10" viewBox="0 0 7 10"><path d="M1 1L5 5L1 9" fill="none" stroke="#8c8c8c" stroke-width="1.5"/></svg>
<svg style="left:36px;top:386px;" width="16" height="16" viewBox="0 0 16 16"><rect x="0" y="4" width="8" height="3" fill="#2a9ad8"/><rect x="0" y="7.5" width="8" height="3" fill="#3aa860"/><rect x="0" y="11" width="9" height="4" fill="#e06a30"/><path d="M9 2L14 15" stroke="#e8b030" stroke-width="2.6"/><path d="M8.5 3L13 15" stroke="#2a2a2a" stroke-width="0.6"/></svg>
<div class="t" style="left:57px;top:387px;color:#dcdcdc;letter-spacing:-0.533px">JRE System Library<span style="color:#c4a15f"> [JavaSE-1.8]</span></div>
<svg style="left:25px;top:406px;" width="7" height="10" viewBox="0 0 7 10"><path d="M1 1L5 5L1 9" fill="none" stroke="#8c8c8c" stroke-width="1.5"/></svg>
<svg style="left:36px;top:404px;" width="16" height="16" viewBox="0 0 16 16"><rect x="0" y="4" width="8" height="3" fill="#2a9ad8"/><rect x="0" y="7.5" width="8" height="3" fill="#3aa860"/><rect x="0" y="11" width="9" height="4" fill="#e06a30"/><path d="M9 2L14 15" stroke="#e8b030" stroke-width="2.6"/><path d="M8.5 3L13 15" stroke="#2a2a2a" stroke-width="0.6"/></svg>
<div class="t" style="left:57px;top:405px;color:#dcdcdc;letter-spacing:-0.118px">Maven Dependencies</div>
<svg style="left:25px;top:424px;" width="7" height="10" viewBox="0 0 7 10"><path d="M1 1L5 5L1 9" fill="none" stroke="#8c8c8c" stroke-width="1.5"/></svg>
<svg style="left:36px;top:422px;" width="16" height="16" viewBox="0 0 16 16"><path d="M1 4H6L7 3H12V13H1Z" fill="#d8b060"/><path d="M1 13L3.5 8H16L13.5 13Z" fill="#f6d890" stroke="#b89040" stroke-width="0.5"/></svg>
<div class="t" style="left:57px;top:423px;color:#dcdcdc;letter-spacing:0.429px">frontend</div>
<svg style="left:25px;top:442px;" width="7" height="10" viewBox="0 0 7 10"><path d="M1 1L5 5L1 9" fill="none" stroke="#8c8c8c" stroke-width="1.5"/></svg>
<svg style="left:36px;top:440px;" width="16" height="16" viewBox="0 0 16 16"><path d="M1 4H6L7 3H12V13H1Z" fill="#d8b060"/><path d="M1 13L3.5 8H16L13.5 13Z" fill="#f6d890" stroke="#b89040" stroke-width="0.5"/></svg>
<svg style="left:36px;top:448px;" width="7" height="7" viewBox="0 0 7 7"><rect x="0" y="0" width="7" height="7" fill="#d82038"/><path d="M1.8 1.8L5.2 5.2M5.2 1.8L1.8 5.2" stroke="#fff" stroke-width="1.2"/></svg>
<div class="t" style="left:57px;top:441px;color:#dcdcdc;letter-spacing:0.000px">src</div>
<svg style="left:36px;top:458px;" width="16" height="16" viewBox="0 0 16 16"><path d="M1 4H6L7 3H12V13H1Z" fill="#d8b060"/><path d="M1 13L3.5 8H16L13.5 13Z" fill="#f6d890" stroke="#b89040" stroke-width="0.5"/></svg>
<div class="t" style="left:57px;top:459px;color:#dcdcdc;letter-spacing:0.200px">target</div>
<svg style="left:37px;top:478px;" width="12" height="14" viewBox="0 0 12 14"><path d="M0.5 0.5H7.5L11 4V13.5H0.5Z" fill="#eef3fa" stroke="#c8c0a0"/><path d="M7.5 0.5V4H11" fill="#f0e0b0" stroke="#c8a860"/><path d="M2 4.5H9M2 6.5H9M2 8.5H9M2 10.5H9" stroke="#4a6ab8" stroke-width="1"/></svg>
<div class="t" style="left:57px;top:477px;color:#dcdcdc;letter-spacing:-0.294px">hs_err_pid8200.log</div>
<svg style="left:37px;top:496px;" width="12" height="14" viewBox="0 0 12 14"><path d="M0.5 0.5H7.5L11 4V13.5H0.5Z" fill="#eef3fa" stroke="#c8c0a0"/><path d="M7.5 0.5V4H11" fill="#f0e0b0" stroke="#c8a860"/><text x="1.5" y="11" font-size="8" font-family="Liberation Serif" font-weight="bold" fill="#2a4a98">W</text></svg>
<div class="t" style="left:57px;top:495px;color:#dcdcdc;letter-spacing:-0.556px">LICENSE.md</div>
<svg style="left:37px;top:514px;" width="12" height="14" viewBox="0 0 12 14"><path d="M0.5 0.5H7.5L11 4V13.5H0.5Z" fill="#eef3fa" stroke="#c8c0a0"/><path d="M7.5 0.5V4H11" fill="#f0e0b0" stroke="#c8a860"/><path d="M2 4.5H9M2 6.5H9M2 8.5H9M2 10.5H9" stroke="#4a6ab8" stroke-width="1"/></svg>
<div class="t" style="left:57px;top:513px;color:#dcdcdc;letter-spacing:-0.091px">package.json</div>
<svg style="left:37px;top:532px;" width="12" height="14" viewBox="0 0 12 14"><path d="M0.5 0.5H7.5L11 4V13.5H0.5Z" fill="#eef3fa" stroke="#c8c0a0"/><path d="M7.5 0.5V4H11" fill="#f0e0b0" stroke="#c8a860"/><path d="M2 4.5H9M2 6.5H9M2 8.5H9M2 10.5H9" stroke="#4a6ab8" stroke-width="1"/></svg>
<div class="t" style="left:57px;top:531px;color:#dcdcdc;letter-spacing:0.062px">package-lock.json</div>
<svg style="left:37px;top:550px;" width="12" height="14" viewBox="0 0 12 14"><path d="M0.5 0.5H7.5L11 4V13.5H0.5Z" fill="#eef3fa" stroke="#c8c0a0"/><path d="M7.5 0.5V4H11" fill="#f0e0b0" stroke="#c8a860"/><text x="1.2" y="11.5" font-size="8" font-family="Liberation Sans" font-weight="bold" fill="#1a4a98">M</text></svg>
<div class="t" style="left:57px;top:549px;color:#dcdcdc;letter-spacing:0.667px">pom.xml</div>
<svg style="left:37px;top:568px;" width="12" height="14" viewBox="0 0 12 14"><path d="M0.5 0.5H7.5L11 4V13.5H0.5Z" fill="#eef3fa" stroke="#c8c0a0"/><path d="M7.5 0.5V4H11" fill="#f0e0b0" stroke="#c8a860"/><text x="1.5" y="11" font-size="8" font-family="Liberation Serif" font-weight="bold" fill="#2a4a98">W</text></svg>
<div class="t" style="left:57px;top:567px;color:#dcdcdc;letter-spacing:-0.375px">README.md</div>
<svg style="left:36px;top:585px;" width="16" height="14" viewBox="0 0 16 14"><path d="M2 12L4 3L8 2L12 3L14 12" stroke="#fff" stroke-width="1" fill="none"/><circle cx="2.2" cy="11.5" r="2.2" fill="#1ab0e8"/><circle cx="13.8" cy="11.5" r="2.2" fill="#1ab0e8"/><circle cx="2.5" cy="3" r="2.2" fill="#e83040"/><circle cx="8" cy="2.5" r="2.2" fill="#e83040"/><circle cx="13.5" cy="3" r="2.2" fill="#e83040"/></svg>
<div class="t" style="left:57px;top:585px;color:#dcdcdc;letter-spacing:0.062px">webpack.config.js</div>
<div style="position:absolute;left:315px;top:71px;width:1604px;height:509px;background:#2f2f2f;"></div>
<div style="position:absolute;left:315px;top:71px;width:1604px;height:25px;background:linear-gradient(#484a4d,#414346)"></div>
<div style="position:absolute;left:315px;top:96px;width:1604px;height:1px;background:#4c4f52;"></div>
<svg style="left:322px;top:77px;" width="12" height="14" viewBox="0 0 12 14"><path d="M0.5 0.5H8L11.5 4V13.5H0.5Z" fill="#eef3fa" stroke="#c8a860"/><path d="M8 0.5V4H11.5" fill="#f6e6b0" stroke="#c8a860"/><path d="M7 4V9Q7 11.5 4.5 11.5Q3 11.5 2.5 10.5" stroke="#2a5ea8" stroke-width="1.6" fill="none"/></svg>
<div class="t" style="left:338px;top:78px;color:#d8d8d8;letter-spacing:-0.14px">ConverteJrxmlToPdf.java</div>
<div style="position:absolute;left:495px;top:72px;width:178px;height:25px;background:#282828;"></div>
<div style="position:absolute;left:495px;top:94px;width:178px;height:3px;background:#3171a8;"></div>
<svg style="left:501px;top:77px;" width="12" height="14" viewBox="0 0 12 14"><path d="M0.5 0.5H8L11.5 4V13.5H0.5Z" fill="#eef3fa" stroke="#c8a860"/><path d="M8 0.5V4H11.5" fill="#f6e6b0" stroke="#c8a860"/><path d="M7 4V9Q7 11.5 4.5 11.5Q3 11.5 2.5 10.5" stroke="#2a5ea8" stroke-width="1.6" fill="none"/></svg>
<svg style="left:499px;top:84px;" width="7" height="7" viewBox="0 0 7 7"><rect x="0" y="0" width="7" height="7" fill="#d82038"/><path d="M1.8 1.8L5.2 5.2M5.2 1.8L1.8 5.2" stroke="#fff" stroke-width="1.2"/></svg>
<div class="t" style="left:519px;top:78px;color:#f4f4f4;letter-spacing:-0.23px">RelatorioVendaView.java</div>
<svg style="left:655px;top:80px;" width="11" height="11" viewBox="0 0 11 11"><path d="M1.5 1.5L9.5 9.5M9.5 1.5L1.5 9.5" stroke="#fff" stroke-width="2.4"/></svg>
<div style="position:absolute;left:1876px;top:80px;width:10px;height:3px;background:#ffffff;"></div>
<svg style="left:1898px;top:79px;" width="12" height="11" viewBox="0 0 12 11"><rect x="1" y="0.5" width="10" height="1.5" fill="#fff"/><rect x="1" y="3" width="10" height="7.5" fill="#fff"/></svg>
<div style="position:absolute;left:315px;top:97px;width:1574px;height:466px;overflow:hidden;background:#2f2f2f">
<div style="position:absolute;left:45px;top:301px;width:1529px;height:15px;background:#363636"></div>
<div style="position:absolute;left:0;top:0;width:12px;height:466px;background-color:#2f2f2f;background-image:linear-gradient(45deg,#1878a0 25%,transparent 25%,transparent 75%,#1878a0 75%),linear-gradient(45deg,#1878a0 25%,transparent 25%,transparent 75%,#1878a0 75%);background-size:2px 2px;background-position:0 0,1px 1px"></div>
<div class="m" style="left:13px;top:-12px;color:#aab3bc">106</div>
<div class="m" style="left:45px;top:-12px;"><span style="color:#d9e8f7;">        </span><span style="color:#66e1f8;">grid</span><span style="color:#e6e6fa;">.</span><span style="color:#a7ec21;">addColumn</span><span style="color:#e6e6fa;">(</span><span style="color:#f3ec79;">venda</span><span style="color:#e6e6fa;"> -&gt; </span><span style="color:#f3ec79;">venda</span><span style="color:#e6e6fa;">.</span><span style="color:#a7ec21;">getCliente</span><span style="color:#e6e6fa;">().</span><span style="color:#a7ec21;">getNome</span><span style="color:#e6e6fa;">()).</span><span style="color:#a7ec21;">setHeader</span><span style="color:#e6e6fa;">(</span><span style="color:#17c6a3;">"Nome:"</span><span style="color:#e6e6fa;">).</span><span style="color:#a7ec21;">setAutoWidth</span><span style="color:#e6e6fa;">(</span><span style="color:#cc6c1d;">true</span><span style="color:#e6e6fa;">)</span></div>
<div class="m" style="left:13px;top:3px;color:#aab3bc">107</div>
<div class="m" style="left:45px;top:3px;"><span style="color:#d9e8f7;">                </span><span style="color:#e6e6fa;">.</span><span style="color:#a7ec21;">setKey</span><span style="color:#e6e6fa;">(</span><span style="color:#17c6a3;">"cliente.nome"</span><span style="color:#e6e6fa;">);</span></div>
<div class="m" style="left:13px;top:18px;color:#aab3bc">108</div>
<div class="m" style="left:13px;top:33px;color:#aab3bc">109</div>
<div class="m" style="left:45px;top:33px;"><span style="color:#d9e8f7;">        </span><span style="color:#66e1f8;">grid</span><span style="color:#e6e6fa;">.</span><span style="color:#a7ec21;">addColumn</span><span style="color:#e6e6fa;">(</span><span style="color:#d9e8f7;">Venda</span><span style="color:#e6e6fa;">::</span><span style="color:#a7ec21;">getValorTotalVenda</span><span style="color:#e6e6fa;">).</span><span style="color:#a7ec21;">setHeader</span><span style="color:#e6e6fa;">(</span><span style="color:#17c6a3;">"Valor Total:"</span><span style="color:#e6e6fa;">).</span><span style="color:#a7ec21;">setAutoWidth</span><span style="color:#e6e6fa;">(</span><span style="color:#cc6c1d;">true</span><span style="color:#e6e6fa;">)</span></div>
<div class="m" style="left:13px;top:48px;color:#aab3bc">110</div>
<div class="m" style="left:45px;top:48px;"><span style="color:#d9e8f7;">                </span><span style="color:#e6e6fa;">.</span><span style="color:#a7ec21;">setKey</span><span style="color:#e6e6fa;">(</span><span style="color:#17c6a3;">"valorTotalVenda"</span><span style="color:#e6e6fa;">);</span></div>
<div class="m" style="left:13px;top:63px;color:#aab3bc">111</div>
<div class="m" style="left:13px;top:78px;color:#aab3bc">112</div>
<div class="m" style="left:45px;top:78px;"><span style="color:#d9e8f7;">        </span><span style="color:#66e1f8;">grid</span><span style="color:#e6e6fa;">.</span><span style="color:#a7ec21;">getColumns</span><span style="color:#e6e6fa;">().</span><span style="color:#a7ec21;">forEach</span><span style="color:#e6e6fa;">(</span><span style="color:#f3ec79;">col</span><span style="color:#e6e6fa;"> -&gt; </span><span style="color:#f3ec79;">col</span><span style="color:#e6e6fa;">.</span><span style="color:#a7ec21;">setAutoWidth</span><span style="color:#e6e6fa;">(</span><span style="color:#cc6c1d;">true</span><span style="color:#e6e6fa;">).</span><span style="color:#a7ec21;">setSortable</span><span style="color:#e6e6fa;">(</span><span style="color:#cc6c1d;">true</span><span style="color:#e6e6fa;">).</span><span style="color:#a7ec21;">setResizable</span><span style="color:#e6e6fa;">(</span><span style="color:#cc6c1d;">true</span><span style="color:#e6e6fa;">));</span></div>
<div class="m" style="left:13px;top:93px;color:#aab3bc">113</div>
<div class="m" style="left:13px;top:108px;color:#aab3bc">114</div>
<div class="m" style="left:45px;top:108px;"><span style="color:#d9e8f7;">        </span><span style="color:#66e1f8;">gerarRelatorio</span><span style="color:#e6e6fa;">.</span><span style="color:#a7ec21;">addThemeVariants</span><span style="color:#e6e6fa;">(</span><span style="color:#cd7fd7;font-style:italic">ButtonVariant</span><span style="color:#e6e6fa;">.</span><span style="color:#8ddaf8;font-style:italic">LUMO_PRIMARY</span><span style="color:#e6e6fa;">);</span></div>
<div class="m" style="left:13px;top:123px;color:#aab3bc">115</div>
<div class="m" style="left:45px;top:123px;"><span style="color:#d9e8f7;">        </span><span style="color:#66e1f8;">gerarRelatorio</span><span style="color:#e6e6fa;">.</span><span style="color:#a7ec21;">getStyle</span><span style="color:#e6e6fa;">().</span><span style="color:#a7ec21;">set</span><span style="color:#e6e6fa;">(</span><span style="color:#17c6a3;">"margin-top"</span><span style="color:#e6e6fa;">, </span><span style="color:#17c6a3;">"37px"</span><span style="color:#e6e6fa;">);</span></div>
<div class="m" style="left:13px;top:138px;color:#aab3bc">116</div>
<div class="m" style="left:45px;top:138px;"><span style="color:#d9e8f7;">        </span><span style="color:#66e1f8;">gerarRelatorio</span><span style="color:#e6e6fa;">.</span><span style="color:#a7ec21;">setWidth</span><span style="color:#e6e6fa;">(</span><span style="color:#17c6a3;">"180px"</span><span style="color:#e6e6fa;">);</span></div>
<div class="m" style="left:13px;top:153px;color:#aab3bc">117</div>
<div class="m" style="left:45px;top:153px;"><span style="color:#d9e8f7;">        </span><span style="color:#66e1f8;">gerarRelatorio</span><span style="color:#e6e6fa;">.</span><span style="color:#a7ec21;">addClickListener</span><span style="color:#e6e6fa;">(</span><span style="color:#f3ec79;">event</span><span style="color:#e6e6fa;"> -&gt; {</span></div>
<div class="m" style="left:13px;top:168px;color:#aab3bc">118</div>
<div class="m" style="left:45px;top:168px;"><span style="color:#d9e8f7;">            </span><span style="color:#a7ec21;">populaInformacao</span><span style="color:#e6e6fa;">();</span></div>
<div class="m" style="left:13px;top:183px;color:#aab3bc">119</div>
<div class="m" style="left:45px;top:183px;"><span style="color:#d9e8f7;">        </span><span style="color:#e6e6fa;">});</span></div>
<div class="m" style="left:13px;top:198px;color:#aab3bc">120</div>
<div class="m" style="left:13px;top:213px;color:#aab3bc">121</div>
<div class="m" style="left:45px;top:213px;"><span style="color:#d9e8f7;">        </span><span style="color:#66e1f8;">exportarRelatorio</span><span style="color:#e6e6fa;">.</span><span style="color:#a7ec21;">addThemeVariants</span><span style="color:#e6e6fa;">(</span><span style="color:#cd7fd7;font-style:italic">ButtonVariant</span><span style="color:#e6e6fa;">.</span><span style="color:#8ddaf8;font-style:italic">LUMO_PRIMARY</span><span style="color:#e6e6fa;">);</span></div>
<div class="m" style="left:13px;top:228px;color:#aab3bc">122</div>
<div class="m" style="left:45px;top:228px;"><span style="color:#d9e8f7;">        </span><span style="color:#66e1f8;">exportarRelatorio</span><span style="color:#e6e6fa;">.</span><span style="color:#a7ec21;">getStyle</span><span style="color:#e6e6fa;">().</span><span style="color:#a7ec21;">set</span><span style="color:#e6e6fa;">(</span><span style="color:#17c6a3;">"margin-top"</span><span style="color:#e6e6fa;">, </span><span style="color:#17c6a3;">"37px"</span><span style="color:#e6e6fa;">);</span></div>
<div class="m" style="left:13px;top:243px;color:#aab3bc">123</div>
<div class="m" style="left:45px;top:243px;"><span style="color:#d9e8f7;">        </span><span style="color:#66e1f8;">exportarRelatorio</span><span style="color:#e6e6fa;">.</span><span style="color:#a7ec21;">setWidth</span><span style="color:#e6e6fa;">(</span><span style="color:#17c6a3;">"180px"</span><span style="color:#e6e6fa;">);</span></div>
<div class="m" style="left:13px;top:258px;color:#aab3bc">124</div>
<div class="m" style="left:45px;top:258px;"><span style="color:#d9e8f7;">        </span><span style="color:#66e1f8;">exportarRelatorio</span><span style="color:#e6e6fa;">.</span><span style="color:#a7ec21;">addClickListener</span><span style="color:#e6e6fa;">(</span><span style="color:#f3ec79;">event</span><span style="color:#e6e6fa;"> -&gt; {</span></div>
<div class="m" style="left:13px;top:273px;color:#aab3bc">125</div>
<div class="m" style="left:13px;top:288px;color:#aab3bc">126</div>
<div class="m" style="left:45px;top:288px;"><span style="color:#d9e8f7;">            </span><span style="color:#1290c3;">FileDownloadWrapper</span><span style="color:#e6e6fa;"> </span><span style="color:#f3ec79;">buttonWrapper</span><span style="color:#e6e6fa;"> = </span><span style="color:#cc6c1d;">new</span><span style="color:#e6e6fa;"> </span><span style="color:#a7ec21;">FileDownloadWrapper</span><span style="color:#e6e6fa;">(</span></div>
<div class="m" style="left:13px;top:303px;color:#aab3bc">127</div>
<div class="m" style="left:45px;top:303px;"><span style="color:#d9e8f7;">                    </span><span style="color:#cc6c1d;">new</span><span style="color:#e6e6fa;"> </span><span style="color:#a7ec21;">StreamResource</span><span style="color:#e6e6fa;">(</span><span style="color:#17c6a3;">"RelatorioVenda.pdf"</span><span style="color:#e6e6fa;">, () -&gt; </span><span style="color:#66e1f8;">pdf</span><span style="color:#e6e6fa;">.</span><span style="color:#a7ec21;">conversor</span><span style="color:#e6e6fa;">()));</span></div>
<div class="m" style="left:13px;top:318px;color:#aab3bc">128</div>
<div class="m" style="left:45px;top:318px;"><span style="color:#d9e8f7;">            </span><span style="color:#f3ec79;">buttonWrapper</span><span style="color:#e6e6fa;">.</span><span style="color:#a7ec21;">wrapComponent</span><span style="color:#e6e6fa;">(</span><span style="color:#66e1f8;">exportarRelatorio</span><span style="color:#e6e6fa;">);</span></div>
<div class="m" style="left:13px;top:333px;color:#aab3bc">129</div>
<div class="m" style="left:45px;top:333px;"><span style="color:#d9e8f7;">            </span><span style="color:#a7ec21;">add</span><span style="color:#e6e6fa;">(</span><span style="color:#f3ec79;">buttonWrapper</span><span style="color:#e6e6fa;">);</span></div>
<div class="m" style="left:13px;top:348px;color:#aab3bc">130</div>
<div class="m" style="left:13px;top:363px;color:#aab3bc">131</div>
<div class="m" style="left:45px;top:363px;"><span style="color:#d9e8f7;">        </span><span style="color:#e6e6fa;">});</span></div>
<div class="m" style="left:13px;top:378px;color:#aab3bc">132</div>
<div class="m" style="left:13px;top:393px;color:#aab3bc">133</div>
<div class="m" style="left:45px;top:393px;"><span style="color:#d9e8f7;">        </span><span style="color:#66e1f8;">somaValores</span><span style="color:#e6e6fa;">.</span><span style="color:#a7ec21;">setWidth</span><span style="color:#e6e6fa;">(</span><span style="color:#17c6a3;">"245px"</span><span style="color:#e6e6fa;">);</span></div>
<div class="m" style="left:13px;top:408px;color:#aab3bc">134</div>
<div class="m" style="left:45px;top:408px;"><span style="color:#d9e8f7;">        </span><span style="color:#66e1f8;">somaValores</span><span style="color:#e6e6fa;">.</span><span style="color:#a7ec21;">getStyle</span><span style="color:#e6e6fa;">().</span><span style="color:#a7ec21;">set</span><span style="color:#e6e6fa;">(</span><span style="color:#17c6a3;">"margin-left"</span><span style="color:#e6e6fa;">, </span><span style="color:#17c6a3;">"620px"</span><span style="color:#e6e6fa;">);</span></div>
<div class="m" style="left:13px;top:423px;color:#aab3bc">135</div>
<div class="m" style="left:45px;top:423px;"><span style="color:#d9e8f7;">        </span><span style="color:#66e1f8;">somaValores</span><span style="color:#e6e6fa;">.</span><span style="color:#a7ec21;">setLabel</span><span style="color:#e6e6fa;">(</span><span style="color:#17c6a3;">"Valor Total no Período"</span><span style="color:#e6e6fa;">);</span></div>
<div class="m" style="left:13px;top:438px;color:#aab3bc">136</div>
<div class="m" style="left:13px;top:453px;color:#aab3bc">137</div>
<div class="m" style="left:45px;top:453px;"><span style="color:#d9e8f7;">        </span><span style="color:#66e1f8;">dataInicio</span><span style="color:#e6e6fa;">.</span><span style="color:#a7ec21;">setWidth</span><span style="color:#e6e6fa;">(</span><span style="color:#17c6a3;">"181px"</span><span style="color:#e6e6fa;">);</span></div>
<svg style="left:0px;top:301px" width="13" height="14" viewBox="0 0 13 14"><circle cx="6.5" cy="7" r="5.8" fill="#e04848" stroke="#f0a0a0" stroke-width="0.8"/><path d="M4 4.5L9 9.5M9 4.5L4 9.5" stroke="#fff" stroke-width="1.5"/></svg>
<svg style="left:185px;top:313px" width="441" height="3" viewBox="0 0 441 3"><path d="M0 2.5 L2 0.5 L4 2.5 L6 0.5 L8 2.5 L10 0.5 L12 2.5 L14 0.5 L16 2.5 L18 0.5 L20 2.5 L22 0.5 L24 2.5 L26 0.5 L28 2.5 L30 0.5 L32 2.5 L34 0.5 L36 2.5 L38 0.5 L40 2.5 L42 0.5 L44 2.5 L46 0.5 L48 2.5 L50 0.5 L52 2.5 L54 0.5 L56 2.5 L58 0.5 L60 2.5 L62 0.5 L64 2.5 L66 0.5 L68 2.5 L70 0.5 L72 2.5 L74 0.5 L76 2.5 L78 0.5 L80 2.5 L82 0.5 L84 2.5 L86 0.5 L88 2.5 L90 0.5 L92 2.5 L94 0.5 L96 2.5 L98 0.5 L100 2.5 L102 0.5 L104 2.5 L106 0.5 L108 2.5 L110 0.5 L112 2.5 L114 0.5 L116 2.5 L118 0.5 L120 2.5 L122 0.5 L124 2.5 L126 0.5 L128 2.5 L130 0.5 L132 2.5 L134 0.5 L136 2.5 L138 0.5 L140 2.5 L142 0.5 L144 2.5 L146 0.5 L148 2.5 L150 0.5 L152 2.5 L154 0.5 L156 2.5 L158 0.5 L160 2.5 L162 0.5 L164 2.5 L166 0.5 L168 2.5 L170 0.5 L172 2.5 L174 0.5 L176 2.5 L178 0.5 L180 2.5 L182 0.5 L184 2.5 L186 0.5 L188 2.5 L190 0.5 L192 2.5 L194 0.5 L196 2.5 L198 0.5 L200 2.5 L202 0.5 L204 2.5 L206 0.5 L208 2.5 L210 0.5 L212 2.5 L214 0.5 L216 2.5 L218 0.5 L220 2.5 L222 0.5 L224 2.5 L226 0.5 L228 2.5 L230 0.5 L232 2.5 L234 0.5 L236 2.5 L238 0.5 L240 2.5 L242 0.5 L244 2.5 L246 0.5 L248 2.5 L250 0.5 L252 2.5 L254 0.5 L256 2.5 L258 0.5 L260 2.5 L262 0.5 L264 2.5 L266 0.5 L268 2.5 L270 0.5 L272 2.5 L274 0.5 L276 2.5 L278 0.5 L280 2.5 L282 0.5 L284 2.5 L286 0.5 L288 2.5 L290 0.5 L292 2.5 L294 0.5 L296 2.5 L298 0.5 L300 2.5 L302 0.5 L304 2.5 L306 0.5 L308 2.5 L310 0.5 L312 2.5 L314 0.5 L316 2.5 L318 0.5 L320 2.5 L322 0.5 L324 2.5 L326 0.5 L328 2.5 L330 0.5 L332 2.5 L334 0.5 L336 2.5 L338 0.5 L340 2.5 L342 0.5 L344 2.5 L346 0.5 L348 2.5 L350 0.5 L352 2.5 L354 0.5 L356 2.5 L358 0.5 L360 2.5 L362 0.5 L364 2.5 L366 0.5 L368 2.5 L370 0.5 L372 2.5 L374 0.5 L376 2.5 L378 0.5 L380 2.5 L382 0.5 L384 2.5 L386 0.5 L388 2.5 L390 0.5 L392 2.5 L394 0.5 L396 2.5 L398 0.5 L400 2.5 L402 0.5 L404 2.5 L406 0.5 L408 2.5 L410 0.5 L412 2.5 L414 0.5 L416 2.5 L418 0.5 L420 2.5 L422 0.5 L424 2.5 L426 0.5 L428 2.5 L430 0.5 L432 2.5 L434 0.5 L436 2.5 L438 0.5 L440 2.5" fill="none" stroke="#ff1070" stroke-width="1.2"/></svg>
<div style="position:absolute;left:542px;top:286px;width:7px;height:15px;border:1px solid #e0e0e0;box-sizing:border-box"></div>
<div style="position:absolute;left:626px;top:301px;width:2px;height:15px;background:#c8c8c8"></div>
</div>
<div style="position:absolute;left:1889px;top:97px;width:17px;height:466px;background:#1a1a1a;"></div>
<div style="position:absolute;left:1890px;top:413px;width:15px;height:88px;background:#4d4d4d;"></div>
<svg style="left:1893px;top:101px;" width="9" height="6" viewBox="0 0 9 6"><path d="M1 5L4.5 1.5L8 5" stroke="#8a8a8a" stroke-width="1.6" fill="none"/></svg>
<svg style="left:1893px;top:552px;" width="9" height="6" viewBox="0 0 9 6"><path d="M1 1L4.5 4.5L8 1" stroke="#8a8a8a" stroke-width="1.6" fill="none"/></svg>
<div style="position:absolute;left:1906px;top:97px;width:13px;height:483px;background:#2f2f2f;"></div>
<div style="position:absolute;left:1908px;top:101px;width:9px;height:9px;background:#ff0080;border:1px solid #a0a0a0;box-sizing:border-box"></div>
<div style="position:absolute;left:1906px;top:113px;width:12px;height:1px;background:#c8c8c8;"></div>
<div style="position:absolute;left:1908px;top:365px;width:9px;height:5px;background:#0a2a4a;border:1px solid #2a80e0;box-sizing:border-box"></div>
<div style="position:absolute;left:1908px;top:469px;width:9px;height:5px;background:#3a0a2a;border:1px solid #e0207a;box-sizing:border-box"></div>
<div style="position:absolute;left:358px;top:563px;width:1531px;height:17px;background:#1a1a1a;"></div>
<div style="position:absolute;left:358px;top:563px;width:1514px;height:1px;background:#0a0a0a;"></div>
<svg style="left:363px;top:567px;" width="6" height="9" viewBox="0 0 6 9"><path d="M5 1L1.5 4.5L5 8" stroke="#9a9a9a" stroke-width="1.6" fill="none"/></svg>
<svg style="left:1878px;top:567px;" width="6" height="9" viewBox="0 0 6 9"><path d="M1 1L4.5 4.5L1 8" stroke="#9a9a9a" stroke-width="1.6" fill="none"/></svg>
<div style="position:absolute;left:1889px;top:563px;width:17px;height:17px;background:#333333;"></div>
<div style="position:absolute;left:315px;top:585px;width:1604px;height:424px;background:#2f2f2f;"></div>
<div style="position:absolute;left:315px;top:585px;width:1604px;height:25px;background:linear-gradient(#484a4d,#414346)"></div>
<div style="position:absolute;left:315px;top:610px;width:1604px;height:1px;background:#4c4f52;"></div>
<div style="position:absolute;left:315px;top:586px;width:93px;height:25px;background:#282828;"></div>
<svg style="left:321px;top:592px;" width="14" height="14" viewBox="0 0 14 14"><rect x="0.5" y="0.5" width="13" height="10" rx="1.5" fill="#e8eef6" stroke="#2f62b0" stroke-width="1.3"/><path d="M3 4H9M3 6.5H11" stroke="#2f62b0" stroke-width="1"/><path d="M2 13.5H12" stroke="#2f62b0" stroke-width="1.2"/></svg>
<div class="t" style="left:338px;top:592px;color:#f4f4f4;">Console</div>
<svg style="left:390px;top:593px;" width="11" height="11" viewBox="0 0 11 11"><path d="M1.5 1.5L9.5 9.5M9.5 1.5L1.5 9.5" stroke="#fff" stroke-width="2.4"/></svg>
<svg style="left:415px;top:592px;" width="12" height="15" viewBox="0 0 12 15"><path d="M0.5 0.5H8L11.5 4V14.5H0.5Z" fill="#e0e8ec" stroke="#b8c0c8" stroke-width="0.8"/><path d="M1.5 12L6 8L8 11" fill="#d83838"/><path d="M6 12L9 9L11 12" fill="#a0a0a0"/><rect x="0.5" y="13" width="11" height="1.5" fill="#f4f4f4"/></svg>
<div class="t" style="left:432px;top:592px;color:#d0d0d0;letter-spacing:-0.3px">Report State</div>
<svg style="left:507px;top:592px;" width="13" height="13" viewBox="0 0 13 13"><rect x="0.5" y="0.5" width="12" height="12" fill="#e8eef6" stroke="#8898b0"/><rect x="0.5" y="0.5" width="12" height="2.5" fill="#8898b0"/><path d="M1 5.5H12M1 8H12M1 10.5H12M4 3V12" stroke="#8898b0" stroke-width="0.8"/></svg>
<div class="t" style="left:525px;top:592px;color:#d0d0d0;">Properties</div>
<svg style="left:1552px;top:591px;" width="15" height="15" viewBox="0 0 15 15"><path d="M7 2Q12 1 12.5 6" stroke="#e8b030" stroke-width="2.2" fill="none"/><path d="M7 13Q2 14 2.5 9" stroke="#e8b030" stroke-width="2.2" fill="none"/><path d="M5 2L8.5 -0.5V4.5Z" fill="#f6d070"/><path d="M9 13L5.5 15.5V10.5Z" fill="#f6d070"/></svg>
<svg style="left:1577px;top:592px;" width="13" height="13" viewBox="0 0 13 13"><path d="M2 2L11 11M11 2L2 11" stroke="#b0b0b0" stroke-width="2.6"/></svg>
<svg style="left:1597px;top:591px;" width="17" height="15" viewBox="0 0 17 15"><path d="M1 2L10 11M10 2L1 11" stroke="#b0b0b0" stroke-width="2.4"/><path d="M6 4L15 13M15 4L6 13" stroke="#c0c0c0" stroke-width="2.4"/></svg>
<div style="position:absolute;left:1622px;top:593px;width:12px;height:11px;background:#e83040;border:1px solid #ff8a90;box-sizing:border-box"></div>
<div style="position:absolute;left:1643px;top:590px;width:1px;height:17px;background:#2a2c2e;"></div>
<svg style="left:1651px;top:590px;" width="15" height="16" viewBox="0 0 15 16"><path d="M0.5 0.5H7L10.5 4V15H0.5Z" fill="#e8eef6" stroke="#b0b8c8"/><path d="M2 5H8M2 7.5H8M2 10H8" stroke="#5a7ab8"/><path d="M10 10L14 14M14 10L10 14" stroke="#909090" stroke-width="1.3"/></svg>
<svg style="left:1675px;top:590px;" width="15" height="16" viewBox="0 0 15 16"><path d="M4.5 0.5H11L14.5 4V15H4.5Z" fill="#e8eef6" stroke="#b0b8c8"/><path d="M6 5H12M6 7.5H12" stroke="#5a7ab8"/><rect x="0" y="9" width="8" height="6" fill="#e8b830"/><path d="M2 9V6.5Q4 4 6 6.5V9" stroke="#a08030" fill="none"/></svg>
<svg style="left:1697px;top:590px;" width="16" height="16" viewBox="0 0 16 16"><path d="M0.5 0.5H7L10.5 4V15H0.5Z" fill="#e8eef6" stroke="#b0b8c8"/><path d="M2 5H8M2 7.5H8" stroke="#5a7ab8"/><path d="M15 5V11H9M9 11L11 9M9 11L11 13" stroke="#e8b030" stroke-width="1.6" fill="none"/></svg>
<div style="position:absolute;left:1717px;top:587px;width:23px;height:21px;background:#3d5468;border:1px solid #2a6aa8;box-sizing:border-box"></div>
<div style="position:absolute;left:1740px;top:587px;width:23px;height:21px;background:#3d5468;border:1px solid #2a6aa8;box-sizing:border-box"></div>
<svg style="left:1721px;top:590px;" width="16" height="15" viewBox="0 0 16 15"><rect x="3" y="0.5" width="12" height="9" fill="#e8eef6" stroke="#5a80c0"/><path d="M5 3.5H12M5 6H12" stroke="#3a60a8"/><path d="M1 7V13H8" stroke="#e8eef6" stroke-width="1.5" fill="none"/></svg>
<svg style="left:1744px;top:590px;" width="16" height="15" viewBox="0 0 16 15"><rect x="3" y="0.5" width="12" height="9" fill="#e8eef6" stroke="#5a80c0"/><path d="M7 2.5L11 7M11 2.5L7 7" stroke="#e02020" stroke-width="1.4"/><path d="M1 7V13H8" stroke="#e8eef6" stroke-width="1.5" fill="none"/></svg>
<div style="position:absolute;left:1767px;top:590px;width:1px;height:17px;background:#2a2c2e;"></div>
<svg style="left:1774px;top:590px;" width="16" height="16" viewBox="0 0 16 16"><rect x="0.5" y="4.5" width="13" height="10" fill="#e8f2fa" stroke="#a0b0c0"/><rect x="0.5" y="4.5" width="13" height="2" fill="#4a90d8"/><path d="M7 9L13 2" stroke="#30a040" stroke-width="3.2"/><path d="M7 9L4 12" stroke="#303030" stroke-width="1"/></svg>
<svg style="left:1800px;top:591px;" width="14" height="15" viewBox="0 0 14 15"><rect x="0.5" y="0.5" width="12" height="10" rx="1.5" fill="#e0e0e0" stroke="#a8a8a8" stroke-width="1.3"/><path d="M3 4H8M3 6.5H10" stroke="#909090"/><path d="M1 14H12" stroke="#a0a0a0" stroke-width="1.3"/></svg>
<svg style="left:1820px;top:597px;" width="8" height="5" viewBox="0 0 8 5"><path d="M0 0H8L4 4.5Z" fill="#808488"/></svg>
<svg style="left:1837px;top:590px;" width="16" height="16" viewBox="0 0 16 16"><rect x="0.5" y="3.5" width="12" height="11" fill="#f0f6fc" stroke="#c8a860"/><rect x="0.5" y="3.5" width="12" height="2.5" fill="#5aa0e0"/><path d="M2 14.5Q10 14 11.5 7" stroke="#e8c870" fill="none" stroke-width="1.2"/><path d="M12.5 0V7M9 3.5H16" stroke="#f6e6a0" stroke-width="2.2"/><path d="M12.5 0.8V6.2M9.8 3.5H15.2" stroke="#c89a30" stroke-width="1"/></svg>
<svg style="left:1859px;top:597px;" width="8" height="5" viewBox="0 0 8 5"><path d="M0 0H8L4 4.5Z" fill="#1e1e1e"/></svg>
<div style="position:absolute;left:1876px;top:595px;width:10px;height:3px;background:#ffffff;"></div>
<svg style="left:1898px;top:594px;" width="12" height="11" viewBox="0 0 12 11"><rect x="1" y="0.5" width="10" height="1.5" fill="#fff"/><rect x="1" y="3" width="10" height="7.5" fill="#fff"/></svg>
<div style="position:absolute;left:315px;top:611px;width:1604px;height:15px;background:#2f2f2f;"></div>
<div class="t" style="left:315px;top:612px;color:#d8d8d8;letter-spacing:-0.063px">Vaadin-Application-Sales-master - Application [Spring Boot App] C:\Program Files\Java\jdk-13.0.1\bin\javaw.exe  (22 de jun de 2021 13:34:36)</div>
<div style="position:absolute;left:315px;top:626px;width:1604px;height:2px;background:#f4f4f4;"></div>
<div style="position:absolute;left:315px;top:628px;width:1587px;height:364px;overflow:hidden;background:#2f2f2f">
<div class="m" style="left:2px;top:2px;color:#ffffff">2021-06-22 14:09:52.634  INFO 6712 --- [  restartedMain] org.atmosphere.cpr.AtmosphereFramework   : Installed AtmosphereInterceptor org.atmosphere.interceptor.WebSocketMessageSuspendInterceptor with priority AFTER_DEFAULT</div>
<div class="m" style="left:2px;top:17px;color:#ffffff">2021-06-22 14:09:52.634  INFO 6712 --- [  restartedMain] org.atmosphere.cpr.AtmosphereFramework   : Installed AtmosphereInterceptor Browser disconnection detection with priority AFTER_DEFAULT</div>
<div class="m" style="left:2px;top:32px;color:#ffffff">2021-06-22 14:09:52.634  INFO 6712 --- [  restartedMain] org.atmosphere.cpr.AtmosphereFramework   : Installed AtmosphereInterceptor org.atmosphere.interceptor.IdleResourceInterceptor with priority BEFORE_DEFAULT</div>
<div class="m" style="left:2px;top:47px;color:#ffffff">2021-06-22 14:09:52.634  INFO 6712 --- [  restartedMain] org.atmosphere.cpr.AtmosphereFramework   : Using EndpointMapper class org.atmosphere.util.DefaultEndpointMapper</div>
<div class="m" style="left:2px;top:62px;color:#ffffff">2021-06-22 14:09:52.634  INFO 6712 --- [  restartedMain] org.atmosphere.cpr.AtmosphereFramework   : Using BroadcasterCache: org.atmosphere.cache.UUIDBroadcasterCache</div>
<div class="m" style="left:2px;top:77px;color:#ffffff">2021-06-22 14:09:52.634  INFO 6712 --- [  restartedMain] org.atmosphere.cpr.AtmosphereFramework   : Default Broadcaster Class: org.atmosphere.cpr.DefaultBroadcaster</div>
<div class="m" style="left:2px;top:92px;color:#ffffff">2021-06-22 14:09:52.634  INFO 6712 --- [  restartedMain] org.atmosphere.cpr.AtmosphereFramework   : Broadcaster Shared List Resources: false</div>
<div class="m" style="left:2px;top:107px;color:#ffffff">2021-06-22 14:09:52.634  INFO 6712 --- [  restartedMain] org.atmosphere.cpr.AtmosphereFramework   : Broadcaster Polling Wait Time 100</div>
<div class="m" style="left:2px;top:122px;color:#ffffff">2021-06-22 14:09:52.634  INFO 6712 --- [  restartedMain] org.atmosphere.cpr.AtmosphereFramework   : Shared ExecutorService supported: true</div>
<div class="m" style="left:2px;top:137px;color:#ffffff">2021-06-22 14:09:52.634  INFO 6712 --- [  restartedMain] org.atmosphere.cpr.AtmosphereFramework   : Messaging ExecutorService Pool Size unavailable - Not instance of ThreadPoolExecutor</div>
<div class="m" style="left:2px;top:152px;color:#ffffff">2021-06-22 14:09:52.634  INFO 6712 --- [  restartedMain] org.atmosphere.cpr.AtmosphereFramework   : Async I/O Thread Pool Size: 200</div>
<div class="m" style="left:2px;top:167px;color:#ffffff">2021-06-22 14:09:52.634  INFO 6712 --- [  restartedMain] org.atmosphere.cpr.AtmosphereFramework   : Using BroadcasterFactory: org.atmosphere.cpr.DefaultBroadcasterFactory</div>
<div class="m" style="left:2px;top:182px;color:#ffffff">2021-06-22 14:09:52.634  INFO 6712 --- [  restartedMain] org.atmosphere.cpr.AtmosphereFramework   : Using AtmosphereResurceFactory: org.atmosphere.cpr.DefaultAtmosphereResourceFactory</div>
<div class="m" style="left:2px;top:197px;color:#ffffff">2021-06-22 14:09:52.634  INFO 6712 --- [  restartedMain] org.atmosphere.cpr.AtmosphereFramework   : Using WebSocketProcessor: org.atmosphere.websocket.DefaultWebSocketProcessor</div>
<div class="m" style="left:2px;top:212px;color:#ffffff">2021-06-22 14:09:52.634  INFO 6712 --- [  restartedMain] org.atmosphere.cpr.AtmosphereFramework   : Invoke AtmosphereInterceptor on WebSocket message true</div>
<div class="m" style="left:2px;top:227px;color:#ffffff">2021-06-22 14:09:52.634  INFO 6712 --- [  restartedMain] org.atmosphere.cpr.AtmosphereFramework   : HttpSession supported: true</div>
<div class="m" style="left:2px;top:242px;color:#ffffff">2021-06-22 14:09:52.634  INFO 6712 --- [  restartedMain] org.atmosphere.cpr.AtmosphereFramework   : Atmosphere is using org.atmosphere.inject.InjectableObjectFactory for dependency injection and object creation</div>
<div class="m" style="left:2px;top:257px;color:#ffffff">2021-06-22 14:09:52.634  INFO 6712 --- [  restartedMain] org.atmosphere.cpr.AtmosphereFramework   : Atmosphere is using async support: org.atmosphere.container.JSR356AsyncSupport running under container: Apache Tomcat/9.0.45 using javax.servlet/3.0 and jsr356/WebSocket API</div>
<div class="m" style="left:2px;top:272px;color:#ffffff">2021-06-22 14:09:52.634  INFO 6712 --- [  restartedMain] org.atmosphere.cpr.AtmosphereFramework   : Atmosphere Framework 2.4.30.slf4jvaadin1 started.</div>
<div class="m" style="left:2px;top:287px;color:#ffffff">2021-06-22 14:09:52.634  INFO 6712 --- [  restartedMain] org.atmosphere.cpr.AtmosphereFramework   : Installed AtmosphereInterceptor  Track Message Size Interceptor using | with priority BEFORE_DEFAULT</div>
<div class="m" style="left:2px;top:302px;color:#ffffff">2021-06-22 14:09:52.641  INFO 6712 --- [  restartedMain] o.s.b.w.embedded.tomcat.TomcatWebServer  : Tomcat started on port(s): 8080 (http) with context path ''</div>
<div class="m" style="left:2px;top:317px;color:#ffffff">2021-06-22 14:09:52.643  INFO 6712 --- [  restartedMain] br.com.fjsistemas.Application            : Started Application in 16.581 seconds (JVM running for 2111.47)</div>
<div class="m" style="left:2px;top:332px;color:#ffffff">2021-06-22 14:09:52.644  INFO 6712 --- [  restartedMain] .ConditionEvaluationDeltaLoggingListener : Condition evaluation unchanged</div>
</div>
<div style="position:absolute;left:1902px;top:628px;width:17px;height:364px;background:#1a1a1a;"></div>
<svg style="left:1906px;top:635px;" width="9" height="6" viewBox="0 0 9 6"><path d="M1 5L4.5 1.5L8 5" stroke="#8a8a8a" stroke-width="1.6" fill="none"/></svg>
<div style="position:absolute;left:1903px;top:958px;width:15px;height:17px;background:#4d4d4d;"></div>
<svg style="left:1906px;top:981px;" width="9" height="6" viewBox="0 0 9 6"><path d="M1 1L4.5 4.5L8 1" stroke="#8a8a8a" stroke-width="1.6" fill="none"/></svg>
<div style="position:absolute;left:315px;top:992px;width:1587px;height:17px;background:#1a1a1a;"></div>
<div style="position:absolute;left:315px;top:992px;width:1570px;height:1px;background:#0c0c0c;"></div>
<div style="position:absolute;left:332px;top:993px;width:810px;height:15px;background:#4d4d4d;"></div>
<svg style="left:320px;top:996px;" width="6" height="9" viewBox="0 0 6 9"><path d="M5 1L1.5 4.5L5 8" stroke="#8a8a8a" stroke-width="1.6" fill="none"/></svg>
<svg style="left:1891px;top:996px;" width="6" height="9" viewBox="0 0 6 9"><path d="M1 1L4.5 4.5L1 8" stroke="#8a8a8a" stroke-width="1.6" fill="none"/></svg>
<div style="position:absolute;left:1902px;top:992px;width:17px;height:17px;background:#3a3a3a;"></div>
<div style="position:absolute;left:0px;top:1009px;width:1920px;height:31px;background:#51565a;"></div>
<div style="position:absolute;left:1179px;top:1012px;width:1px;height:25px;background:#d8d8d8;"></div>
<div style="position:absolute;left:1313px;top:1012px;width:1px;height:25px;background:#d8d8d8;"></div>
<div style="position:absolute;left:1441px;top:1012px;width:1px;height:25px;background:#d8d8d8;"></div>
<div class="t" style="left:1186px;top:1016px;color:#e8e8e8;">Writable</div>
<div class="t" style="left:1320px;top:1016px;color:#e8e8e8;">Smart Insert</div>
<div class="t" style="left:1448px;top:1016px;color:#e8e8e8;letter-spacing:-0.5px">127 : 84 : 3953</div>
<svg style="left:1565px;top:1015px;" width="3" height="18" viewBox="0 0 3 18"><rect x="0.5" y="0.5" width="2" height="2" fill="#d9d2c2"/><rect x="0.5" y="5.5" width="2" height="2" fill="#d9d2c2"/><rect x="0.5" y="10.5" width="2" height="2" fill="#d9d2c2"/><rect x="0.5" y="15.5" width="2" height="2" fill="#d9d2c2"/></svg>
<svg style="left:1851px;top:1015px;" width="3" height="18" viewBox="0 0 3 18"><rect x="0.5" y="0.5" width="2" height="2" fill="#d9d2c2"/><rect x="0.5" y="5.5" width="2" height="2" fill="#d9d2c2"/><rect x="0.5" y="10.5" width="2" height="2" fill="#d9d2c2"/><rect x="0.5" y="15.5" width="2" height="2" fill="#d9d2c2"/></svg>
<div style="position:absolute;left:1856px;top:1010px;width:28px;height:30px;background:transparent;border:1px solid #e8e8e8;box-sizing:border-box"></div>
<svg style="left:1862px;top:1017px;" width="16" height="15" viewBox="0 0 16 15"><path d="M3 11V7Q3 2.5 8 2.5Q13 2.5 13 7V11Z" fill="#e8306a"/><circle cx="8" cy="2" r="1.2" fill="#e8306a"/><ellipse cx="8" cy="12" rx="6.5" ry="2" fill="none" stroke="#e8306a" stroke-width="1.5"/></svg>
<svg style="left:1892px;top:1015px;" width="3" height="18" viewBox="0 0 3 18"><rect x="0.5" y="0.5" width="2" height="2" fill="#d9d2c2"/><rect x="0.5" y="4.5" width="2" height="2" fill="#d9d2c2"/><rect x="0.5" y="8.5" width="2" height="2" fill="#d9d2c2"/><rect x="0.5" y="12.5" width="2" height="2" fill="#d9d2c2"/></svg>
<svg style="left:1902px;top:1017px;" width="11" height="16" viewBox="0 0 11 16"><circle cx="5.5" cy="5" r="4.5" fill="#f8d040"/><circle cx="5.5" cy="4.5" r="2.5" fill="#fff4c0"/><rect x="3.5" y="10" width="4" height="3" fill="#c0c8d8"/><rect x="3.5" y="13" width="4" height="2" fill="#5a78a8"/></svg>
<div style="position:absolute;left:0px;top:1040px;width:1920px;height:40px;background:#101010;"></div>
<svg style="left:16px;top:1052px;" width="17" height="17" viewBox="0 0 17 17"><path d="M0 2.3L6.8 1.3V7.8H0Z M7.6 1.2L16.5 0V7.8H7.6Z M0 8.6H6.8V15.2L0 14.2Z M7.6 8.6H16.5V16.5L7.6 15.3Z" fill="#ffffff"/></svg>
<svg style="left:62px;top:1047px;" width="26" height="26" viewBox="0 0 26 26"><defs><linearGradient id="eg" x1="0" y1="0.2" x2="1" y2="0.6"><stop offset="0" stop-color="#1aa0f0"/><stop offset="0.5" stop-color="#28c0cc"/><stop offset="1" stop-color="#6ee860"/></linearGradient></defs><circle cx="12.5" cy="12.5" r="12" fill="url(#eg)"/><path d="M0.6 12 Q3 7 9 8 Q4 10 9.5 13 Q9 18 15 19.5 Q19 20 21.5 18 Q18 24 12 24.5 Q1 24 0.6 12Z" fill="#1268c8"/><path d="M9.5 13 Q9.5 9.5 12.5 9.8 Q14.5 10.5 13.8 13 Q13.5 15.5 17 16.5 Q20.5 17 22.5 15.5 Q20 19.5 15.5 19.5 Q9.5 19 9.5 13Z" fill="#0e0e0e"/><circle cx="6" cy="18.5" r="5.6" fill="#d4d2ce"/><circle cx="6" cy="16.6" r="2" fill="#8e8e8e"/><path d="M2.6 22.3Q6 18.8 9.4 22.3Z" fill="#8e8e8e"/></svg>
<div style="position:absolute;left:55px;top:1078px;width:40px;height:2px;background:#aef0fc;"></div>
<div style="position:absolute;left:100px;top:1040px;width:48px;height:40px;background:#2e2e2e;"></div>
<div style="position:absolute;left:100px;top:1078px;width:48px;height:2px;background:#aef0fc;"></div>
<svg style="left:112px;top:1048px;" width="25" height="23" viewBox="0 0 25 23"><circle cx="11.8" cy="11.5" r="11.2" fill="#f7941e"/><circle cx="13" cy="11.5" r="10.8" fill="#2c2255"/><circle cx="13" cy="15" r="5" fill="#3a3080" opacity="0.7"/><rect x="2" y="8" width="22" height="2.2" fill="#cfcde0"/><rect x="2" y="11" width="22" height="1.6" fill="#ffffff"/><rect x="2" y="13.4" width="22" height="2" fill="#cfcde0"/></svg>
<svg style="left:1626px;top:1051px" width="19" height="19" viewBox="0 0 19 19"><defs><linearGradient id="sg" x1="0" y1="0" x2="1" y2="1"><stop offset="0" stop-color="#ffe070"/><stop offset="1" stop-color="#f0a000"/></linearGradient></defs><circle cx="9.5" cy="9.5" r="9.3" fill="url(#sg)"/></svg>
<div class="t" style="left:1656px;top:1052px;font-size:14px;letter-spacing:-0.4px;line-height:18px;color:#dcdcdc">28°C</div>
<div class="t" style="left:1694px;top:1052px;font-size:13.5px;letter-spacing:-0.3px;line-height:18px;color:#dcdcdc">Ensolarado</div>
<svg style="left:1778px;top:1056px;" width="14" height="8" viewBox="0 0 14 8"><path d="M1 7L7 1L13 7" stroke="#e8e8e8" stroke-width="1.3" fill="none"/></svg>
<div class="t" style="left:1796px;top:1044px;width:72px;text-align:center;color:#f0f0f0">14:10</div>
<div class="t" style="left:1796px;top:1062px;width:72px;text-align:center;color:#f0f0f0">22/06/2021</div>
<svg style="left:1879px;top:1052px;" width="17" height="17" viewBox="0 0 17 17"><path d="M0.75 0.75H15.75V12.25H10L8 14.5L6 12.25H0.75Z" fill="none" stroke="#f0f0f0" stroke-width="1.4"/></svg>
<div style="position:absolute;left:1915px;top:1040px;width:1px;height:40px;background:#5a5a5a;"></div>
</body></html>
